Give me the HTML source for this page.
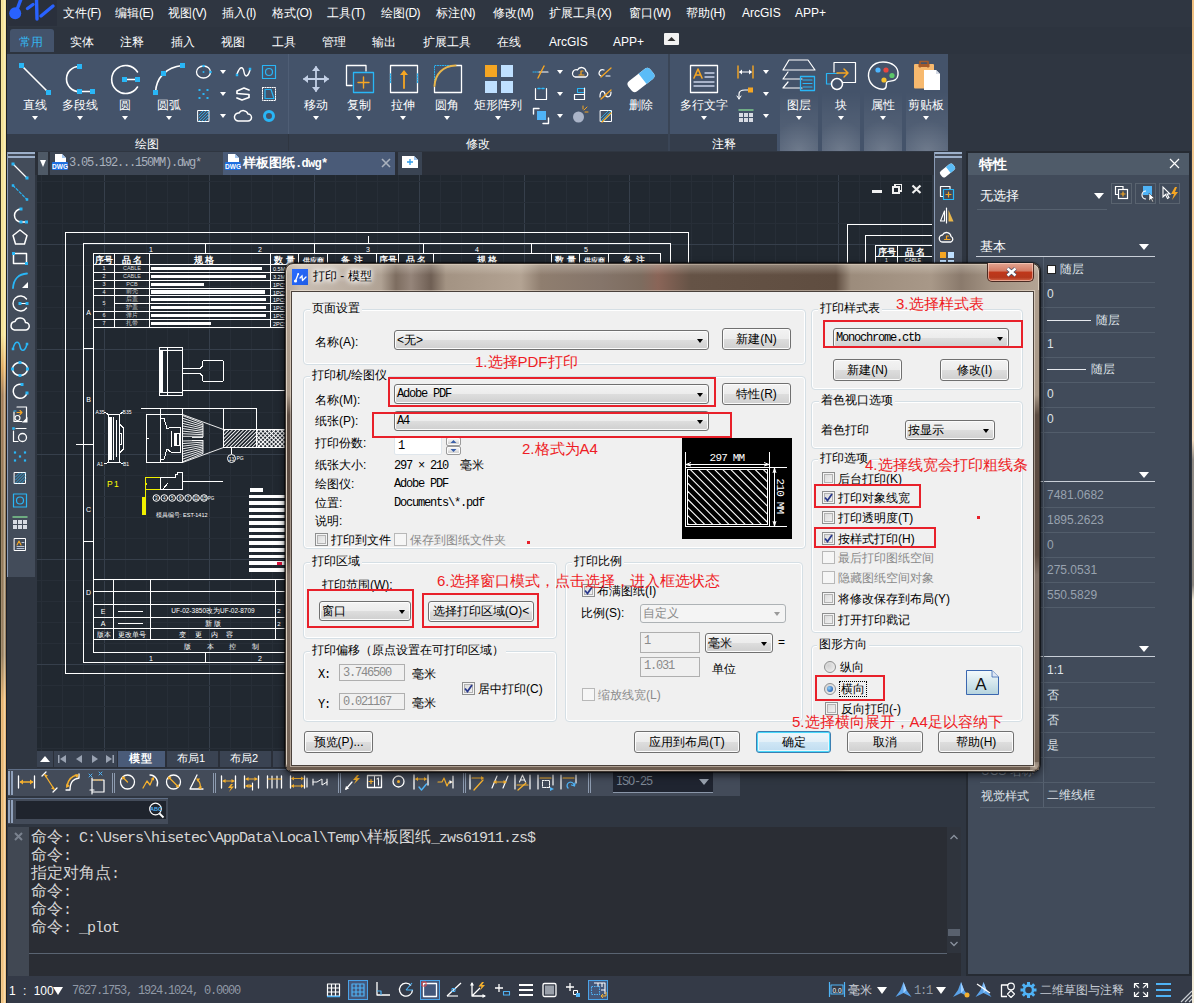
<!DOCTYPE html>
<html><head><meta charset="utf-8"><title>ZWCAD</title>
<style>
html,body{margin:0;padding:0}
body{width:1194px;height:1003px;position:relative;overflow:hidden;background:#2f3641;font-family:"Liberation Sans",sans-serif;}
div{position:absolute;box-sizing:border-box}
svg{position:absolute;overflow:visible}
.t{white-space:nowrap;line-height:1}
.mono{font-family:"Liberation Mono",monospace}
.serif{font-family:"Liberation Serif",serif}

.mi{color:#fff;font-size:12px;top:7px}
.rt{color:#fff;font-size:12px;top:36px}
.rl{color:#fff;font-size:12px;top:99px;transform:translateX(-50%)}
.pl{color:#fff;font-size:12px;top:138px;transform:translateX(-50%)}
.da{width:0;height:0;border-left:3px solid transparent;border-right:3px solid transparent;border-top:4px solid #fff}

.cad{font-family:"Liberation Sans",sans-serif;stroke:none}

.pv{font-size:12px;color:#dde1e7}
.pg{font-size:12px;color:#98a2af}

.cmd{font-family:"Liberation Mono",monospace;font-size:15px;letter-spacing:-1px;color:#d6d6d6;left:31px}
.cmd b{font-weight:normal;font-size:16px;letter-spacing:0}

.dl{font-size:12px;color:#000;white-space:nowrap;line-height:12px}
.dg{font-size:12px;color:#8a8a8a;white-space:nowrap;line-height:12px}
.dm{font-family:"Liberation Mono",monospace;font-size:12px;letter-spacing:-1.2px;color:#000;white-space:nowrap;line-height:12px}
.btn{border:1px solid #707070;border-radius:3px;background:linear-gradient(180deg,#f3f3f3 0%,#ececec 48%,#dddddd 52%,#cfcfcf 100%);box-shadow:inset 0 0 0 1px #fcfcfc;font-size:12px;color:#000;text-align:center;white-space:nowrap}
.cmb{border:1px solid #707070;border-radius:3px;background:linear-gradient(180deg,#f3f3f3 0%,#ececec 48%,#dddddd 52%,#cfcfcf 100%);box-shadow:inset 0 0 0 1px #fcfcfc}
.cmbd{border:1px solid #adb2b5;border-radius:3px;background:#f4f4f4}
.ed{border:1px solid #dfe6ec;border-radius:2px;background:#fff}
.edd{border:1px solid #afafaf;background:#f0f0f0}
.grp{border:1px solid #d5dfe5;border-radius:4px;box-shadow:inset 0 0 0 1px #fff}
.gl{background:#f0f0f0;padding:0 2px;font-size:12px;color:#000;white-space:nowrap;line-height:12px}
.cb{width:13px;height:13px;border:1px solid #8e8f8f;background:linear-gradient(135deg,#d6d6d6,#f6f6f6);box-shadow:inset 0 0 0 1px #f4f4f4, inset 0 0 0 2px #b3b3b3}
.cbd{width:13px;height:13px;border:1px solid #b8b8b8;background:#f6f6f6}
.red{border:2px solid #e8202a}
.an{font-size:15px;color:#ee1c25;white-space:nowrap;line-height:15px}
.arr{width:0;height:0;border-left:3.5px solid transparent;border-right:3.5px solid transparent;border-top:4px solid #000}
.k{display:inline-block;white-space:nowrap;text-align:justify;text-align-last:justify;text-justify:inter-character}
</style></head>
<body>
<div style="left:0px;top:0px;width:7px;height:1003px;background:#3a3420;"></div>
<div style="left:1px;top:0px;width:5px;height:1003px;background:linear-gradient(180deg,#f3dc80 0px,#f3dc80 335px,#d9943c 368px,#8a5a32 395px,#70502f 520px,#7c5c3a 655px,#e2a050 700px,#eeb466 1003px);"></div>
<div style="left:1px;top:0px;width:5px;height:1003px;background:linear-gradient(90deg,rgba(255,255,240,0.35) 0%,rgba(255,250,220,0.2) 35%,rgba(255,255,235,0.55) 70%,rgba(255,240,200,0.1) 100%);"></div>
<div style="left:6px;top:0px;width:1px;height:1003px;background:#1c1f26;"></div>
<div style="left:7px;top:0px;width:1187px;height:27px;background:#2f3641;"></div>
<svg style="left:8px;top:0" width="50" height="26" viewBox="0 0 50 26"><rect x="0" y="0" width="49" height="26" fill="#2a303c"/><g stroke="#2962ff" stroke-width="3.4" stroke-linecap="round" fill="none"><path d="M8.500 11 L13 -1"/><path d="M19.500 8.500 L25 4.500"/><path d="M28.500 -1 L29 19"/><path d="M33 16 L45 6"/></g><circle cx="7.200" cy="13.200" r="6" fill="#2962ff"/></svg>
<div class="t mi" style="left:63px"><span class="k" style="width:2em">文件</span><span style="font-size:12px;letter-spacing:-0.6px">(F)</span></div>
<div class="t mi" style="left:115px"><span class="k" style="width:2em">编辑</span><span style="font-size:12px;letter-spacing:-0.6px">(E)</span></div>
<div class="t mi" style="left:168px"><span class="k" style="width:2em">视图</span><span style="font-size:12px;letter-spacing:-0.6px">(V)</span></div>
<div class="t mi" style="left:222px"><span class="k" style="width:2em">插入</span><span style="font-size:12px;letter-spacing:-0.6px">(I)</span></div>
<div class="t mi" style="left:272px"><span class="k" style="width:2em">格式</span><span style="font-size:12px;letter-spacing:-0.6px">(O)</span></div>
<div class="t mi" style="left:327px"><span class="k" style="width:2em">工具</span><span style="font-size:12px;letter-spacing:-0.6px">(T)</span></div>
<div class="t mi" style="left:381px"><span class="k" style="width:2em">绘图</span><span style="font-size:12px;letter-spacing:-0.6px">(D)</span></div>
<div class="t mi" style="left:436px"><span class="k" style="width:2em">标注</span><span style="font-size:12px;letter-spacing:-0.6px">(N)</span></div>
<div class="t mi" style="left:493px"><span class="k" style="width:2em">修改</span><span style="font-size:12px;letter-spacing:-0.6px">(M)</span></div>
<div class="t mi" style="left:549px"><span class="k" style="width:4em">扩展工具</span><span style="font-size:12px;letter-spacing:-0.6px">(X)</span></div>
<div class="t mi" style="left:629px"><span class="k" style="width:2em">窗口</span><span style="font-size:12px;letter-spacing:-0.6px">(W)</span></div>
<div class="t mi" style="left:686px"><span class="k" style="width:2em">帮助</span><span style="font-size:12px;letter-spacing:-0.6px">(H)</span></div>
<div class="t mi" style="left:742px">ArcGIS</div>
<div class="t mi" style="left:795px">APP+</div>
<div style="left:7px;top:27px;width:1187px;height:27px;background:#2d343f;"></div>
<div style="left:10px;top:29px;width:44px;height:23px;background:#44536b;border-radius:3px 3px 0 0"></div>
<div class="t rt" style="left:19px;color:#35b5f0"><span class="k" style="width:2em">常用</span></div>
<div class="t rt" style="left:70px;color:#ffffff"><span class="k" style="width:2em">实体</span></div>
<div class="t rt" style="left:120px;color:#ffffff"><span class="k" style="width:2em">注释</span></div>
<div class="t rt" style="left:171px;color:#ffffff"><span class="k" style="width:2em">插入</span></div>
<div class="t rt" style="left:221px;color:#ffffff"><span class="k" style="width:2em">视图</span></div>
<div class="t rt" style="left:272px;color:#ffffff"><span class="k" style="width:2em">工具</span></div>
<div class="t rt" style="left:322px;color:#ffffff"><span class="k" style="width:2em">管理</span></div>
<div class="t rt" style="left:372px;color:#ffffff"><span class="k" style="width:2em">输出</span></div>
<div class="t rt" style="left:423px;color:#ffffff"><span class="k" style="width:4em">扩展工具</span></div>
<div class="t rt" style="left:497px;color:#ffffff"><span class="k" style="width:2em">在线</span></div>
<div class="t rt" style="left:549px;color:#ffffff">ArcGIS</div>
<div class="t rt" style="left:613px;color:#ffffff">APP+</div>
<svg style="left:664px;top:33px" width="15" height="12"><rect width="15" height="12" rx="1" fill="#f2f2f2"/><path d="M3.5 8 L7.5 4 L11.5 8 Z" fill="#333"/></svg>
<div style="left:7px;top:54px;width:281px;height:80px;background:#44536a;"></div>
<div style="left:7px;top:134px;width:281px;height:17px;background:#343d4b;"></div>
<div style="left:289px;top:54px;width:379px;height:80px;background:#44536a;"></div>
<div style="left:289px;top:134px;width:379px;height:17px;background:#343d4b;"></div>
<div style="left:670px;top:54px;width:107px;height:80px;background:#44536a;"></div>
<div style="left:670px;top:134px;width:107px;height:17px;background:#343d4b;"></div>
<div style="left:288px;top:54px;width:1px;height:80px;background:#4f5e75;"></div>
<div style="left:668px;top:54px;width:2px;height:97px;background:#3a4556;"></div>
<div style="left:777px;top:54px;width:171px;height:97px;background:#44536a;"></div>
<div style="left:780px;top:92px;width:38px;height:59px;background:linear-gradient(180deg,rgba(255,255,255,0) 0%,rgba(255,255,255,0.05) 40%,rgba(255,255,255,0.10) 100%);"></div>
<div style="left:780px;top:110px;width:38px;height:41px;background:radial-gradient(ellipse 70% 75% at 50% 100%,rgba(255,255,255,0.14),rgba(255,255,255,0) 100%);"></div>
<div style="left:822px;top:92px;width:38px;height:59px;background:linear-gradient(180deg,rgba(255,255,255,0) 0%,rgba(255,255,255,0.05) 40%,rgba(255,255,255,0.10) 100%);"></div>
<div style="left:822px;top:110px;width:38px;height:41px;background:radial-gradient(ellipse 70% 75% at 50% 100%,rgba(255,255,255,0.14),rgba(255,255,255,0) 100%);"></div>
<div style="left:864px;top:92px;width:38px;height:59px;background:linear-gradient(180deg,rgba(255,255,255,0) 0%,rgba(255,255,255,0.05) 40%,rgba(255,255,255,0.10) 100%);"></div>
<div style="left:864px;top:110px;width:38px;height:41px;background:radial-gradient(ellipse 70% 75% at 50% 100%,rgba(255,255,255,0.14),rgba(255,255,255,0) 100%);"></div>
<div style="left:906px;top:92px;width:42px;height:59px;background:linear-gradient(180deg,rgba(255,255,255,0) 0%,rgba(255,255,255,0.05) 40%,rgba(255,255,255,0.10) 100%);"></div>
<div style="left:906px;top:110px;width:42px;height:41px;background:radial-gradient(ellipse 70% 75% at 50% 100%,rgba(255,255,255,0.14),rgba(255,255,255,0) 100%);"></div>
<div class="t pl" style="left:147px"><span class="k" style="width:2em">绘图</span></div>
<div class="t pl" style="left:478px"><span class="k" style="width:2em">修改</span></div>
<div class="t pl" style="left:724px"><span class="k" style="width:2em">注释</span></div>
<div class="t rl" style="left:35px"><span class="k" style="width:2em">直线</span></div>
<div class="da" style="left:32px;top:116px"></div>
<div class="t rl" style="left:80px"><span class="k" style="width:3em">多段线</span></div>
<div class="da" style="left:77px;top:116px"></div>
<div class="t rl" style="left:125px"><span class="k" style="width:1em">圆</span></div>
<div class="da" style="left:122px;top:116px"></div>
<div class="t rl" style="left:169px"><span class="k" style="width:2em">圆弧</span></div>
<div class="da" style="left:166px;top:116px"></div>
<div class="t rl" style="left:316px"><span class="k" style="width:2em">移动</span></div>
<div class="da" style="left:313px;top:116px"></div>
<div class="t rl" style="left:359px"><span class="k" style="width:2em">复制</span></div>
<div class="da" style="left:356px;top:116px"></div>
<div class="t rl" style="left:403px"><span class="k" style="width:2em">拉伸</span></div>
<div class="da" style="left:400px;top:116px"></div>
<div class="t rl" style="left:447px"><span class="k" style="width:2em">圆角</span></div>
<div class="da" style="left:444px;top:116px"></div>
<div class="t rl" style="left:498px"><span class="k" style="width:4em">矩形阵列</span></div>
<div class="da" style="left:495px;top:116px"></div>
<div class="t rl" style="left:641px"><span class="k" style="width:2em">删除</span></div>
<div class="t rl" style="left:704px"><span class="k" style="width:4em">多行文字</span></div>
<div class="da" style="left:701px;top:116px"></div>
<div class="t rl" style="left:799px"><span class="k" style="width:2em">图层</span></div>
<div class="da" style="left:796px;top:116px"></div>
<div class="t rl" style="left:841px"><span class="k" style="width:1em">块</span></div>
<div class="da" style="left:838px;top:116px"></div>
<div class="t rl" style="left:883px"><span class="k" style="width:2em">属性</span></div>
<div class="da" style="left:880px;top:116px"></div>
<div class="t rl" style="left:926px"><span class="k" style="width:3em">剪贴板</span></div>
<div class="da" style="left:923px;top:116px"></div>
<div class="da" style="left:220px;top:70px"></div>
<div class="da" style="left:220px;top:92px"></div>
<div class="da" style="left:220px;top:114px"></div>
<div class="da" style="left:557px;top:70px"></div>
<div class="da" style="left:557px;top:92px"></div>
<div class="da" style="left:557px;top:114px"></div>
<div class="da" style="left:763px;top:70px"></div>
<div class="da" style="left:763px;top:92px"></div>
<div class="da" style="left:763px;top:114px"></div>
<svg style="left:0;top:0" width="1194" height="160" viewBox="0 0 1194 160" fill="none" stroke-linecap="round" stroke-linejoin="round"><path d="M21.5 65.5 L48.5 92.5" stroke="#ffffff" stroke-width="1.6"/><rect x="19.0" y="63.0" width="5" height="5" fill="#29b6f6"/><rect x="46.0" y="90.0" width="5" height="5" fill="#29b6f6"/><path d="M79 66.5 A12.5 12.5 0 0 0 79 91.5 L92 91.5" stroke="#ffffff" stroke-width="1.6"/><rect x="77.0" y="64.0" width="5" height="5" fill="#29b6f6"/><rect x="77.0" y="89.0" width="5" height="5" fill="#29b6f6"/><rect x="90.0" y="89.0" width="5" height="5" fill="#29b6f6"/><path d="M137.5 72 A14 14 0 1 0 137.5 87" stroke="#ffffff" stroke-width="1.6"/><path d="M125 79.5 L137 79.5" stroke="#ffffff" stroke-width="1.4"/><rect x="122.0" y="77.0" width="5" height="5" fill="#29b6f6"/><rect x="135.0" y="77.0" width="5" height="5" fill="#29b6f6"/><path d="M155.5 92.5 C156 78 166 67 182.5 65.5" stroke="#ffffff" stroke-width="1.6"/><rect x="153.0" y="90.0" width="5" height="5" fill="#29b6f6"/><rect x="161.0" y="71.0" width="5" height="5" fill="#29b6f6"/><rect x="180.0" y="63.0" width="5" height="5" fill="#29b6f6"/><ellipse cx="203.5" cy="72" rx="7" ry="6" stroke="#ffffff" stroke-width="1.3"/><circle cx="203.5" cy="72" r="1" fill="#29b6f6"/><circle cx="203.5" cy="66" r="1.3" fill="#29b6f6"/><circle cx="210.5" cy="72" r="1.3" fill="#29b6f6"/><rect x="198.5" y="89" width="2" height="2" fill="#29b6f6"/><rect x="206.5" y="89" width="2" height="2" fill="#29b6f6"/><rect x="202.5" y="93" width="2" height="2" fill="#29b6f6"/><rect x="198.5" y="97" width="2" height="2" fill="#29b6f6"/><rect x="206.5" y="97" width="2" height="2" fill="#29b6f6"/><rect x="198" y="110.5" width="11" height="11" stroke="#ffffff" stroke-width="1"/><path d="M199 118 l7-7 M199 121 l10-10 M202 121 l7-7 M205 121 l4-4 M199 115 l4-4" stroke="#29b6f6" stroke-width="0.8"/><path d="M237 74 C240 66 243 66 244 72 C245 78 248 77 250 70" stroke="#ffffff" stroke-width="1.4"/><rect x="235.75" y="73.75" width="2.5" height="2.5" fill="#29b6f6"/><rect x="248.75" y="67.75" width="2.5" height="2.5" fill="#29b6f6"/><path d="M249 90 L244 88 L237 91 L237 93.5 L249 94.5 L249 97.5 L242 100 L237 98" stroke="#ffffff" stroke-width="1.7"/><path d="M238 121 L248 121 A3.5 3.5 0 0 0 248 114 A5 5 0 0 0 239 113 A4 4 0 0 0 238 121 Z" stroke="#ffffff" stroke-width="1.5"/><rect x="262.5" y="65.5" width="13" height="13" stroke="#29b6f6" stroke-width="1.2"/><circle cx="269" cy="72" r="3.5" stroke="#29b6f6" stroke-width="1.2"/><rect x="262.5" y="87.5" width="13" height="13" stroke="#ffffff" stroke-width="1" stroke-dasharray="1.2 1.2"/><path d="M265 89.5 L271 89.5 L274 98.5 L265 98.5 Z" stroke="#29b6f6" stroke-width="1.2"/><circle cx="269" cy="116" r="4.5" stroke="#29b6f6" stroke-width="3"/><path d="M316 67 L316 91 M304 79 L328 79" stroke="#c3d0e6" stroke-width="1.8"/><path d="M316 66 l-4 5 h8z M316 92 l-4-5 h8z M303 79 l5-4 v8z M329 79 l-5-4 v8z" fill="#c3d0e6" stroke="none"/><path d="M366 71 V65.5 H346.5 V85.5 H352" stroke="#ffffff" stroke-width="1.3"/><rect x="353.5" y="72.5" width="20" height="20" stroke="#29b6f6" stroke-width="1.3"/><path d="M363.5 77 V88 M358 82.5 H369" stroke="#f5a623" stroke-width="1.4"/><rect x="390.5" y="65.5" width="27" height="27" stroke="#ffffff" stroke-width="1.3"/><path d="M404 88 V72" stroke="#f5a623" stroke-width="1.8"/><path d="M404 70 l-4 5 h8z" fill="#f5a623"/><path d="M390.5 74 V84 M417.5 74 V84" stroke="#29b6f6" stroke-width="1.3" stroke-dasharray="1 1.5"/><path d="M456 65.5 H461.5 V92.5 H434.5 V87" stroke="#ffffff" stroke-width="1.3"/><path d="M434.5 85 V65.5 H455" stroke="#29b6f6" stroke-width="1" stroke-dasharray="1 1.5"/><path d="M434.5 86 C435 74 443 66 455.5 65.5" stroke="#e8b64c" stroke-width="2"/><rect x="485" y="65" width="12" height="12" fill="#f5a623"/><rect x="501" y="65" width="12" height="12" fill="#bfe0ff"/><rect x="485" y="81" width="12" height="12" fill="#bfe0ff"/><rect x="501" y="81" width="12" height="12" fill="#bfe0ff"/><path d="M533 72 H539" stroke="#29b6f6" stroke-width="1" stroke-dasharray="1 1"/><path d="M539 72 H548" stroke="#ffffff" stroke-width="1.2"/><path d="M544 66 L538 78" stroke="#f5a623" stroke-width="1.4"/><path d="M535.5 88.5 V99.5 H546.5 V88.5" stroke="#ffffff" stroke-width="1.2"/><path d="M538 88.5 H544" stroke="#29b6f6" stroke-width="1.6" stroke-dasharray="2 2"/><rect x="537" y="111" width="9" height="9" fill="#4fb3f6"/><path d="M533.5 114 V108.5 H539 M543 123.5 H548.5 V118" stroke="#ffffff" stroke-width="1.4"/><path d="M575 77 H586 A3 3 0 0 0 586 71.5 A4.5 4.5 0 0 0 577.5 70 A3.5 3.5 0 0 0 575 77 Z" stroke="#ffffff" stroke-width="1.3"/><path d="M579 75 H584 M581 75 V71 H583" stroke="#f5a623" stroke-width="1.2"/><rect x="577.5" y="88.5" width="7" height="4" stroke="#29b6f6" stroke-width="1.1"/><path d="M574.5 94.5 H584.5 V99.5 H574.5 Z M584.5 88 V94" stroke="#ffffff" stroke-width="1.2"/><circle cx="578.5" cy="117" r="5.5" fill="#aab4c8"/><path d="M584 110 l3 -3 M585 112 h3 M583 109 v-3" stroke="#f5a623" stroke-width="1"/><path d="M601 76 A3 3 0 0 1 604 70 M606 76 H610" stroke="#ffffff" stroke-width="1.2"/><path d="M601 77 L611 68" stroke="#f5a623" stroke-width="1.3"/><path d="M600 97 C600 90 604 90 605 94 C606 98 611 98 611 92" stroke="#ffffff" stroke-width="1.2"/><path d="M601 99 L611 90" stroke="#f5a623" stroke-width="1.3"/><rect x="600.5" y="110.5" width="11" height="11" stroke="#ffffff" stroke-width="1"/><path d="M601 118 l7-7 M601 121 l10-10 M604 121 l7-7" stroke="#29b6f6" stroke-width="0.8"/><path d="M602 122 L611 113" stroke="#f5a623" stroke-width="1.3"/><g transform="translate(641 80) rotate(-38)"><rect x="-14" y="-6.5" width="28" height="13" rx="4" fill="#ffffff"/><path d="M2 -6.5 H10 A4 4 0 0 1 14 -2.5 V2.5 A4 4 0 0 1 10 6.5 H2 Z" fill="#5bbcf7"/></g><rect x="690.5" y="65.5" width="27" height="27" stroke="#ffffff" stroke-width="1.3"/><path d="M694 78 L698 69 L702 78 M695.5 75 H700.5" stroke="#f5a623" stroke-width="1.6"/><path d="M705 73 H714 M705 77 H714 M694 82 H714 M694 86 H714" stroke="#c7d2e8" stroke-width="1.3"/><path d="M738 66 V78 M753 66 V78" stroke="#f5a623" stroke-width="1.4"/><path d="M740 72 H751" stroke="#ffffff" stroke-width="1.2"/><path d="M739 72 l3-2.5 v5z M752 72 l-3-2.5 v5z" fill="#ffffff"/><path d="M739 99 V94 Q739 90 745 90 H748" stroke="#ffffff" stroke-width="1.2"/><path d="M737 96 l2 3 l2 -3" stroke="#ffffff" stroke-width="1"/><rect x="748" y="87.5" width="5" height="5" fill="#f5a623"/><path d="M739 110 H753" stroke="#7ecb8f" stroke-width="1.5"/><rect x="739" y="113" width="4" height="4" fill="#d7dbe3"/><rect x="744" y="113" width="4" height="4" fill="#d7dbe3"/><rect x="749" y="113" width="4" height="4" fill="#d7dbe3"/><rect x="739" y="118" width="4" height="4" fill="#d7dbe3"/><rect x="744" y="118" width="4" height="4" fill="#d7dbe3"/><rect x="749" y="118" width="4" height="4" fill="#d7dbe3"/><path d="M789 60 H808 L815 70 H783 Z M788 72 L783 79 H802 M788 82 L783 88 H802" stroke="#ffffff" stroke-width="1.2"/><rect x="800.5" y="76.5" width="14" height="14" stroke="#29b6f6" stroke-width="1.3"/><path d="M803 80 H812 M803 83.5 H812 M803 87 H812" stroke="#29b6f6" stroke-width="1.2"/><path d="M834 72 V62.5 H855.5 V82.5 H843" stroke="#ffffff" stroke-width="1.2"/><path d="M831 84 H826.5 V73.5 H838" stroke="#29b6f6" stroke-width="1.2"/><circle cx="837" cy="84" r="5.5" stroke="#ffffff" stroke-width="1.5"/><path d="M837 73 H848 M844 69 l4 4 l-4 4" stroke="#f5a623" stroke-width="1.5"/><path d="M883 62 C871 62 867 72 869 79 C871 87 880 90 884 89 C888 88 885 84 887 82 C889 80 897 83 898 75 C899 67 892 62 883 62 Z" stroke="#ffffff" stroke-width="1.4"/><circle cx="878" cy="70" r="2.600" fill="#4db5ff"/><circle cx="886" cy="70" r="2.600" fill="#e8473f"/><circle cx="892" cy="75.500" r="2.600" fill="#5cc86a"/><circle cx="884" cy="80" r="2.600" fill="#f6c12d"/><rect x="914" y="64" width="20" height="24.500" rx="1" fill="#f7b96e"/><path d="M920 67 V61.500 H928 V67" stroke="#a55a2a" stroke-width="1.600"/><rect x="918.500" y="64" width="11" height="3" fill="#a55a2a"/><path d="M924 70 H936 L940 74 V90 H924 Z" fill="#fff"/><path d="M936 70 V74 H940 Z" fill="#d5dbe6"/></svg>
<div style="left:35px;top:152px;width:900px;height:23px;background:#2a2f38;"></div>
<div style="left:38px;top:152px;width:10px;height:23px;background:#4e5966;"></div>
<div style="left:40px;top:160px;width:0;height:0;border-left:3.5px solid transparent;border-right:3.5px solid transparent;border-top:7px solid #fff"></div>
<div style="left:50px;top:152px;width:173px;height:23px;background:#3d4654;"></div>
<div style="left:223px;top:152px;width:172px;height:23px;background:#4a5b78;"></div>
<div style="left:398px;top:152px;width:24px;height:23px;background:#3a4453;"></div>
<svg style="left:52px;top:154px" width="16" height="18" viewBox="0 0 16 18"><path d="M3 0 H10 L14 4 V9 H3 Z" fill="#fff"/><path d="M10 0 V4 H14 Z" fill="#9fc4ee"/><rect x="0" y="8" width="16" height="8" rx="1" fill="#1e6fe0"/><text x="8" y="14.6" font-size="6.5" font-weight="bold" text-anchor="middle" fill="#fff" font-family="Liberation Sans,sans-serif">DWG</text></svg>
<svg style="left:225px;top:154px" width="16" height="18" viewBox="0 0 16 18"><path d="M3 0 H10 L14 4 V9 H3 Z" fill="#fff"/><path d="M10 0 V4 H14 Z" fill="#9fc4ee"/><rect x="0" y="8" width="16" height="8" rx="1" fill="#1e6fe0"/><text x="8" y="14.6" font-size="6.5" font-weight="bold" text-anchor="middle" fill="#fff" font-family="Liberation Sans,sans-serif">DWG</text></svg>
<div class="t mono" style="left:69px;top:157px;font-size:12px;letter-spacing:-1.2px;color:#a9b1bd">3.05.192...150MM).dwg*</div>
<div class="t" style="left:243px;top:156px;font-size:13px;font-weight:bold;color:#fff"><span class="k" style="width:4em">样板图纸</span><span class="mono" style="font-size:12px;letter-spacing:-0.7px">.dwg*</span></div>
<svg style="left:381px;top:158px" width="10" height="10"><path d="M1 1 L9 9 M9 1 L1 9" stroke="#aab2be" stroke-width="1.6"/></svg>
<svg style="left:402px;top:156px" width="17" height="13"><path d="M0 0 H12 L16 4 V12 H0 Z" fill="#fff"/><path d="M12 0 V4 H16 Z" fill="#9fc4ee"/><path d="M8 3 V9 M5 6 H11" stroke="#2c9be8" stroke-width="1.3"/></svg>
<div style="left:37px;top:175px;width:895px;height:576px;background:#212830;"></div>
<svg style="left:0;top:0" width="1194" height="760" viewBox="0 0 1194 760" fill="none" shape-rendering="crispEdges"><defs><clipPath id="cv"><rect x="37" y="175" width="895" height="576"/></clipPath><pattern id="h1" width="2.6" height="2.6" patternUnits="userSpaceOnUse" patternTransform="rotate(-45)"><rect width="2.6" height="1.2" fill="#fff"/></pattern><pattern id="h2" width="3" height="3" patternUnits="userSpaceOnUse" patternTransform="rotate(45)"><rect width="3" height="1" fill="#fff"/><rect width="1" height="3" fill="#fff"/></pattern></defs><g clip-path="url(#cv)"><rect x="41" y="175" width="1" height="576" fill="#272e37"/><rect x="62" y="175" width="1" height="576" fill="#272e37"/><rect x="83" y="175" width="1" height="576" fill="#272e37"/><rect x="104" y="175" width="1" height="576" fill="#363f4b"/><rect x="125" y="175" width="1" height="576" fill="#272e37"/><rect x="146" y="175" width="1" height="576" fill="#272e37"/><rect x="167" y="175" width="1" height="576" fill="#272e37"/><rect x="188" y="175" width="1" height="576" fill="#272e37"/><rect x="209" y="175" width="1" height="576" fill="#363f4b"/><rect x="230" y="175" width="1" height="576" fill="#272e37"/><rect x="251" y="175" width="1" height="576" fill="#272e37"/><rect x="272" y="175" width="1" height="576" fill="#272e37"/><rect x="293" y="175" width="1" height="576" fill="#272e37"/><rect x="314" y="175" width="1" height="576" fill="#363f4b"/><rect x="335" y="175" width="1" height="576" fill="#272e37"/><rect x="356" y="175" width="1" height="576" fill="#272e37"/><rect x="377" y="175" width="1" height="576" fill="#272e37"/><rect x="398" y="175" width="1" height="576" fill="#272e37"/><rect x="419" y="175" width="1" height="576" fill="#363f4b"/><rect x="440" y="175" width="1" height="576" fill="#272e37"/><rect x="461" y="175" width="1" height="576" fill="#272e37"/><rect x="482" y="175" width="1" height="576" fill="#272e37"/><rect x="503" y="175" width="1" height="576" fill="#272e37"/><rect x="524" y="175" width="1" height="576" fill="#363f4b"/><rect x="545" y="175" width="1" height="576" fill="#272e37"/><rect x="566" y="175" width="1" height="576" fill="#272e37"/><rect x="587" y="175" width="1" height="576" fill="#272e37"/><rect x="608" y="175" width="1" height="576" fill="#272e37"/><rect x="629" y="175" width="1" height="576" fill="#363f4b"/><rect x="649" y="175" width="1" height="576" fill="#272e37"/><rect x="670" y="175" width="1" height="576" fill="#272e37"/><rect x="691" y="175" width="1" height="576" fill="#272e37"/><rect x="712" y="175" width="1" height="576" fill="#272e37"/><rect x="733" y="175" width="1" height="576" fill="#363f4b"/><rect x="754" y="175" width="1" height="576" fill="#272e37"/><rect x="775" y="175" width="1" height="576" fill="#272e37"/><rect x="796" y="175" width="1" height="576" fill="#272e37"/><rect x="817" y="175" width="1" height="576" fill="#272e37"/><rect x="838" y="175" width="1" height="576" fill="#363f4b"/><rect x="859" y="175" width="1" height="576" fill="#272e37"/><rect x="880" y="175" width="1" height="576" fill="#272e37"/><rect x="901" y="175" width="1" height="576" fill="#272e37"/><rect x="922" y="175" width="1" height="576" fill="#272e37"/><rect x="37" y="181" width="895" height="1" fill="#272e37"/><rect x="37" y="202" width="895" height="1" fill="#272e37"/><rect x="37" y="223" width="895" height="1" fill="#272e37"/><rect x="37" y="244" width="895" height="1" fill="#363f4b"/><rect x="37" y="265" width="895" height="1" fill="#272e37"/><rect x="37" y="286" width="895" height="1" fill="#272e37"/><rect x="37" y="307" width="895" height="1" fill="#272e37"/><rect x="37" y="328" width="895" height="1" fill="#272e37"/><rect x="37" y="349" width="895" height="1" fill="#363f4b"/><rect x="37" y="370" width="895" height="1" fill="#272e37"/><rect x="37" y="391" width="895" height="1" fill="#272e37"/><rect x="37" y="412" width="895" height="1" fill="#272e37"/><rect x="37" y="433" width="895" height="1" fill="#272e37"/><rect x="37" y="454" width="895" height="1" fill="#363f4b"/><rect x="37" y="475" width="895" height="1" fill="#272e37"/><rect x="37" y="496" width="895" height="1" fill="#272e37"/><rect x="37" y="517" width="895" height="1" fill="#272e37"/><rect x="37" y="538" width="895" height="1" fill="#272e37"/><rect x="37" y="559" width="895" height="1" fill="#363f4b"/><rect x="37" y="580" width="895" height="1" fill="#272e37"/><rect x="37" y="601" width="895" height="1" fill="#272e37"/><rect x="37" y="622" width="895" height="1" fill="#272e37"/><rect x="37" y="643" width="895" height="1" fill="#272e37"/><rect x="37" y="664" width="895" height="1" fill="#363f4b"/><rect x="37" y="685" width="895" height="1" fill="#272e37"/><rect x="37" y="706" width="895" height="1" fill="#272e37"/><rect x="37" y="727" width="895" height="1" fill="#272e37"/><rect x="37" y="748" width="895" height="1" fill="#272e37"/><path d="M65.5 232.5 H688.5 V673.5 H65.5 Z" stroke="#fff" stroke-width="1"/><path d="M83.5 243.5 H670.5 V662.5 H83.5 Z" stroke="#fff" stroke-width="1"/><path d="M93.5 253.5 H660.5 V652.5 H93.5 Z" stroke="#fff" stroke-width="1"/><path d="M205.5 243.5 L205.5 253.5" stroke="#ffffff" stroke-width="1"/><path d="M205.5 652.5 L205.5 662.5" stroke="#ffffff" stroke-width="1"/><path d="M314.5 243.5 L314.5 253.5" stroke="#ffffff" stroke-width="1"/><path d="M314.5 652.5 L314.5 662.5" stroke="#ffffff" stroke-width="1"/><path d="M423.5 243.5 L423.5 253.5" stroke="#ffffff" stroke-width="1"/><path d="M423.5 652.5 L423.5 662.5" stroke="#ffffff" stroke-width="1"/><path d="M531.5 243.5 L531.5 253.5" stroke="#ffffff" stroke-width="1"/><path d="M531.5 652.5 L531.5 662.5" stroke="#ffffff" stroke-width="1"/><path d="M368.5 236 L368.5 243.5" stroke="#ffffff" stroke-width="1"/><text x="151" y="251.5" font-size="7" text-anchor="middle" fill="#fff" class="cad" xml:space="preserve" >1</text><text x="151" y="660.5" font-size="7" text-anchor="middle" fill="#fff" class="cad" xml:space="preserve" >1</text><text x="260" y="251.5" font-size="7" text-anchor="middle" fill="#fff" class="cad" xml:space="preserve" >2</text><text x="260" y="660.5" font-size="7" text-anchor="middle" fill="#fff" class="cad" xml:space="preserve" >2</text><text x="368" y="251.5" font-size="7" text-anchor="middle" fill="#fff" class="cad" xml:space="preserve" >3</text><text x="368" y="660.5" font-size="7" text-anchor="middle" fill="#fff" class="cad" xml:space="preserve" >3</text><text x="477" y="251.5" font-size="7" text-anchor="middle" fill="#fff" class="cad" xml:space="preserve" >4</text><text x="477" y="660.5" font-size="7" text-anchor="middle" fill="#fff" class="cad" xml:space="preserve" >4</text><text x="586" y="251.5" font-size="7" text-anchor="middle" fill="#fff" class="cad" xml:space="preserve" >5</text><text x="586" y="660.5" font-size="7" text-anchor="middle" fill="#fff" class="cad" xml:space="preserve" >5</text><path d="M83.5 348.5 L93.5 348.5" stroke="#ffffff" stroke-width="1"/><path d="M83.5 541.5 L93.5 541.5" stroke="#ffffff" stroke-width="1"/><path d="M76 444.5 L93.5 444.5" stroke="#ffffff" stroke-width="1"/><text x="88.5" y="315" font-size="7" text-anchor="middle" fill="#fff" class="cad" xml:space="preserve" >A</text><text x="88.5" y="402" font-size="7" text-anchor="middle" fill="#fff" class="cad" xml:space="preserve" >B</text><text x="88.5" y="512" font-size="7" text-anchor="middle" fill="#fff" class="cad" xml:space="preserve" >C</text><text x="88.5" y="595" font-size="7" text-anchor="middle" fill="#fff" class="cad" xml:space="preserve" >D</text><path d="M93.5 264.5 L376.5 264.5" stroke="#ffffff" stroke-width="1"/><path d="M93.5 272.5 L376.5 272.5" stroke="#ffffff" stroke-width="1"/><path d="M93.5 280.5 L376.5 280.5" stroke="#ffffff" stroke-width="1"/><path d="M93.5 288.5 L376.5 288.5" stroke="#ffffff" stroke-width="1"/><path d="M93.5 295.5 L376.5 295.5" stroke="#ffffff" stroke-width="1"/><path d="M114.5 303.5 L376.5 303.5" stroke="#ffffff" stroke-width="1"/><path d="M93.5 311.5 L376.5 311.5" stroke="#ffffff" stroke-width="1"/><path d="M93.5 319.5 L376.5 319.5" stroke="#ffffff" stroke-width="1"/><path d="M93.5 327.5 L376.5 327.5" stroke="#ffffff" stroke-width="1"/><path d="M114.5 253.5 L114.5 327.5" stroke="#ffffff" stroke-width="1"/><path d="M149.5 253.5 L149.5 327.5" stroke="#ffffff" stroke-width="1"/><path d="M270.5 253.5 L270.5 327.5" stroke="#ffffff" stroke-width="1"/><path d="M298.5 253.5 L298.5 327.5" stroke="#ffffff" stroke-width="1"/><path d="M327.5 253.5 L327.5 327.5" stroke="#ffffff" stroke-width="1"/><path d="M376.5 253.5 L376.5 327.5" stroke="#ffffff" stroke-width="1"/><text x="104" y="262.5" font-size="8.5" text-anchor="middle" fill="#fff" class="cad" xml:space="preserve" font-weight="bold">序号</text><text x="132" y="262.5" font-size="8.5" text-anchor="middle" fill="#fff" class="cad" xml:space="preserve" font-weight="bold">品 名</text><text x="204" y="262.5" font-size="8.5" text-anchor="middle" fill="#fff" class="cad" xml:space="preserve" font-weight="bold">规 格</text><text x="284.5" y="262.5" font-size="8.5" text-anchor="middle" fill="#fff" class="cad" xml:space="preserve" font-weight="bold">数 量</text><text x="313" y="262.5" font-size="7" text-anchor="middle" fill="#fff" class="cad" xml:space="preserve" font-weight="bold">供应商</text><text x="352" y="262.5" font-size="8.5" text-anchor="middle" fill="#fff" class="cad" xml:space="preserve" font-weight="bold">备  注</text><text x="104" y="270.0" font-size="5.5" text-anchor="middle" fill="#e0e0e0" class="cad" xml:space="preserve" >1</text><text x="132" y="269.8" font-size="5.5" text-anchor="middle" fill="#d8d8d8" class="cad" xml:space="preserve" >CABLE</text><rect x="151" y="266.7" width="110.5" height="3.6" fill="#fff"/><text x="273" y="271.0" font-size="5.5" text-anchor="start" fill="#fff" class="cad" xml:space="preserve" >0.5M</text><text x="104" y="278.0" font-size="5.5" text-anchor="middle" fill="#e0e0e0" class="cad" xml:space="preserve" >2</text><text x="132" y="277.8" font-size="5.5" text-anchor="middle" fill="#d8d8d8" class="cad" xml:space="preserve" >CABLE</text><rect x="151" y="274.7" width="115" height="3.6" fill="#fff"/><text x="273" y="279.0" font-size="5.5" text-anchor="start" fill="#fff" class="cad" xml:space="preserve" >3.2M</text><text x="104" y="286.0" font-size="5.5" text-anchor="middle" fill="#e0e0e0" class="cad" xml:space="preserve" >3</text><text x="132" y="285.8" font-size="5.5" text-anchor="middle" fill="#d8d8d8" class="cad" xml:space="preserve" >PCB</text><rect x="151" y="282.7" width="52.5" height="3.6" fill="#fff"/><text x="273" y="287.0" font-size="5.5" text-anchor="start" fill="#fff" class="cad" xml:space="preserve" >1PCS</text><text x="104" y="293.5" font-size="5.5" text-anchor="middle" fill="#e0e0e0" class="cad" xml:space="preserve" >4</text><text x="132" y="293.3" font-size="5.5" text-anchor="middle" fill="#d8d8d8" class="cad" xml:space="preserve" >前壳</text><rect x="151" y="290.2" width="114" height="3.6" fill="#fff"/><text x="273" y="294.5" font-size="5.5" text-anchor="start" fill="#fff" class="cad" xml:space="preserve" >1PCS</text><text x="104" y="305.0" font-size="5.5" text-anchor="middle" fill="#e0e0e0" class="cad" xml:space="preserve" >5</text><text x="132" y="300.8" font-size="5.5" text-anchor="middle" fill="#d8d8d8" class="cad" xml:space="preserve" >后盖</text><rect x="151" y="297.7" width="115" height="3.6" fill="#fff"/><text x="273" y="302.0" font-size="5.5" text-anchor="start" fill="#fff" class="cad" xml:space="preserve" >1PCS</text><text x="132" y="308.8" font-size="5.5" text-anchor="middle" fill="#d8d8d8" class="cad" xml:space="preserve" >护盖</text><rect x="151" y="305.7" width="115" height="3.6" fill="#fff"/><text x="273" y="310.0" font-size="5.5" text-anchor="start" fill="#fff" class="cad" xml:space="preserve" >1PCS</text><text x="104" y="317.0" font-size="5.5" text-anchor="middle" fill="#e0e0e0" class="cad" xml:space="preserve" >6</text><text x="132" y="316.8" font-size="5.5" text-anchor="middle" fill="#d8d8d8" class="cad" xml:space="preserve" >弹片</text><rect x="151" y="313.7" width="115" height="3.6" fill="#fff"/><text x="273" y="318.0" font-size="5.5" text-anchor="start" fill="#fff" class="cad" xml:space="preserve" >1PCS</text><text x="104" y="325.0" font-size="5.5" text-anchor="middle" fill="#e0e0e0" class="cad" xml:space="preserve" >7</text><text x="132" y="324.8" font-size="5.5" text-anchor="middle" fill="#d8d8d8" class="cad" xml:space="preserve" >扎带</text><rect x="151" y="321.7" width="60" height="3.6" fill="#fff"/><text x="273" y="326.0" font-size="5.5" text-anchor="start" fill="#fff" class="cad" xml:space="preserve" >2PCS</text><path d="M159.5 347.5 H182.5 V395.5 H159.5 Z" stroke="#fff" stroke-width="1"/><rect x="160" y="350" width="3" height="43" fill="#fff"/><path d="M167.5 347.5 L167.5 395.5" stroke="#ffffff" stroke-width="1"/><path d="M160 392.5 L182 392.5" stroke="#ffffff" stroke-width="1"/><path d="M160 350.5 L182 350.5" stroke="#ffffff" stroke-width="1"/><path d="M182.5 368.5 H200 L202.5 366 V362.5 Q202.5 360.5 204.5 360.5 H221.5 Q223.5 360.5 223.5 362.5 V379.5 Q223.5 381.5 221.5 381.5 H204.5 Q202.5 381.5 202.5 379.5 V376 L200 373.5 H182.5" stroke="#fff"/><path d="M182.5 390.5 L285 390.5" stroke="#ffffff" stroke-width="1"/><path d="M108.5 414.5 H119.5 V462.5 H108.5 Z" stroke="#fff" stroke-width="1"/><rect x="109" y="417" width="2.5" height="43" fill="#fff"/><path d="M113.5 417 L113.5 460" stroke="#ffffff" stroke-width="1"/><path d="M116.5 420 L116.5 457" stroke="#ffffff" stroke-width="1"/><path d="M119.5 424 L123.5 428 V449 L119.5 453 M119.5 433 H121.5 V444 H119.5" stroke="#fff"/><path d="M108.5 414.5 L104 412" stroke="#ffffff" stroke-width="1"/><path d="M119.5 414.5 L123 412" stroke="#ffffff" stroke-width="1"/><path d="M108.5 462.5 L104 464" stroke="#ffffff" stroke-width="1"/><path d="M119.5 462.5 L123 464" stroke="#ffffff" stroke-width="1"/><text x="100" y="414" font-size="5" text-anchor="middle" fill="#fff" class="cad" xml:space="preserve" >A35</text><text x="127" y="414" font-size="5" text-anchor="middle" fill="#fff" class="cad" xml:space="preserve" >B35</text><text x="100" y="466" font-size="5" text-anchor="middle" fill="#fff" class="cad" xml:space="preserve" >A1</text><text x="126" y="466" font-size="5" text-anchor="middle" fill="#fff" class="cad" xml:space="preserve" >B1</text><path d="M146.5 414.5 H182.5 V462.5 H146.5 Z" stroke="#fff" stroke-width="1"/><path d="M160.5 408 L160.5 462.5" stroke="#ffffff" stroke-width="1"/><path d="M140.5 408.5 L256.5 408.5" stroke="#ffffff" stroke-width="1"/><path d="M182.5 408 L182.5 414" stroke="#ffffff" stroke-width="1"/><path d="M223.5 408 L223.5 429" stroke="#ffffff" stroke-width="1"/><path d="M256.5 408 L256.5 429" stroke="#ffffff" stroke-width="1"/><path d="M160.5 418 H164 L167 429 L171 427 H180 V452 H171 L167 449 L164 459 H160.5 M171 431 V447 M174 433 H179 V445 H174 Z M146.5 438.5 H149" stroke="#fff"/><rect x="174" y="433" width="3" height="12" fill="#fff"/><path d="M182.5 415.5 L203 423.5 M182.5 441.0 L203 440.5 M182.5 418.1 L203 425.1 M182.5 443.6 L203 442.1 M182.5 420.7 L203 426.7 M182.5 446.2 L203 443.7 M182.5 423.3 L203 428.3 M182.5 448.8 L203 445.3 M182.5 425.9 L203 429.9 M182.5 451.4 L203 446.9 M182.5 428.5 L203 431.5 M182.5 454.0 L203 448.5 M182.5 431.1 L203 433.1 M182.5 456.6 L203 450.1 M182.5 433.7 L203 434.7 M182.5 459.2 L203 451.7 M182.5 436.3 L203 436.3 M182.5 461.8 L203 453.3 M182.5 414.5 L223.5 429.5 M182.5 462.5 L223.5 447.5 M203 423.5 V437 M203 440 V453.5 M192 437.5 H203 M192 440.5 H203" stroke="#fff" stroke-width="0.9" shape-rendering="auto"/><rect x="223.5" y="429.5" width="33" height="18" fill="url(#h1)" shape-rendering="auto"/><rect x="256.5" y="429.5" width="30" height="18" fill="url(#h2)" shape-rendering="auto"/><path d="M223.5 429 L223.5 448" stroke="#ffffff" stroke-width="1"/><path d="M256.5 429 L256.5 448" stroke="#ffffff" stroke-width="1"/><path d="M223.5 429.5 L286 429.5" stroke="#ffffff" stroke-width="1"/><path d="M223.5 447.5 L286 447.5" stroke="#ffffff" stroke-width="1"/><path d="M231.5 447 L231.5 454" stroke="#ffffff" stroke-width="1"/><circle cx="231.5" cy="458.5" r="4" stroke="#fff" shape-rendering="auto"/><text x="231.5" y="460.5" font-size="5" text-anchor="middle" fill="#fff" class="cad" xml:space="preserve" >13</text><text x="240" y="460" font-size="5" text-anchor="middle" fill="#fff" class="cad" xml:space="preserve" >PG</text><text x="113.5" y="487" font-size="8.5" text-anchor="middle" fill="#ffff00" class="cad" xml:space="preserve" letter-spacing="1.2">P1</text><path d="M164 477.5 H145.5 V483 L146.5 484 L145.5 485 V489.5 H171 M145.5 489.5 V515" stroke="#f0f000" stroke-width="1.2"/><rect x="142" y="497" width="2.6" height="18" fill="#f0f000"/><path d="M160.5 489.5 V477.5 H175 V474 H177.5 V472.5 H182.5 V489.5 Z" stroke="#fff"/><path d="M182.5 481.5 L223 481.5" stroke="#ffffff" stroke-width="1"/><path d="M163 489 L168 483" stroke="#ffffff" stroke-width="1"/><circle cx="156.3" cy="498" r="3.3" stroke="#fff" shape-rendering="auto"/><text x="156.3" y="500" font-size="4.5" text-anchor="middle" fill="#fff" class="cad" xml:space="preserve" >3</text><circle cx="164.25" cy="498" r="3.3" stroke="#fff" shape-rendering="auto"/><text x="164.25" y="500" font-size="4.5" text-anchor="middle" fill="#fff" class="cad" xml:space="preserve" >4</text><circle cx="172.20000000000002" cy="498" r="3.3" stroke="#fff" shape-rendering="auto"/><text x="172.20000000000002" y="500" font-size="4.5" text-anchor="middle" fill="#fff" class="cad" xml:space="preserve" >5</text><circle cx="180.15" cy="498" r="3.3" stroke="#fff" shape-rendering="auto"/><text x="180.15" y="500" font-size="4.5" text-anchor="middle" fill="#fff" class="cad" xml:space="preserve" >6</text><circle cx="188.10000000000002" cy="498" r="3.3" stroke="#fff" shape-rendering="auto"/><text x="188.10000000000002" y="500" font-size="4.5" text-anchor="middle" fill="#fff" class="cad" xml:space="preserve" >7</text><circle cx="196.05" cy="498" r="3.3" stroke="#fff" shape-rendering="auto"/><text x="196.05" y="500" font-size="4.5" text-anchor="middle" fill="#fff" class="cad" xml:space="preserve" >11</text><circle cx="204.0" cy="498" r="3.3" stroke="#fff" shape-rendering="auto"/><text x="204.0" y="500" font-size="4.5" text-anchor="middle" fill="#fff" class="cad" xml:space="preserve" >15</text><text x="211" y="500" font-size="4.5" text-anchor="middle" fill="#fff" class="cad" xml:space="preserve" >PG</text><text x="156" y="517" font-size="5.5" text-anchor="start" fill="#fff" class="cad" xml:space="preserve" >模具编号: EST-1412</text><rect x="249.5" y="488" width="13.5" height="3.5" fill="#fff"/><rect x="249" y="494.5" width="40" height="3.8" fill="#fff"/><rect x="249" y="501.2" width="40" height="3.8" fill="#fff"/><rect x="249" y="507.9" width="40" height="3.8" fill="#fff"/><rect x="249" y="514.5" width="40" height="3.8" fill="#fff"/><rect x="249" y="521.2" width="40" height="3.8" fill="#fff"/><rect x="249" y="527.9" width="40" height="3.8" fill="#fff"/><rect x="249" y="534.6" width="40" height="3.8" fill="#fff"/><rect x="249" y="541.3" width="40" height="3.8" fill="#fff"/><rect x="249" y="547.9" width="40" height="3.8" fill="#fff"/><rect x="249" y="554.6" width="40" height="3.8" fill="#fff"/><rect x="249" y="561.3" width="40" height="3.8" fill="#fff"/><rect x="249" y="568.0" width="40" height="3.8" fill="#fff"/><rect x="277" y="561.5" width="5" height="3.5" fill="#e0103a"/><path d="M93.5 579.5 L290 579.5" stroke="#ffffff" stroke-width="1"/><path d="M93.5 591.5 L290 591.5" stroke="#ffffff" stroke-width="1"/><path d="M93.5 604.5 L290 604.5" stroke="#ffffff" stroke-width="1"/><path d="M93.5 617.5 L290 617.5" stroke="#ffffff" stroke-width="1"/><path d="M93.5 628.5 L290 628.5" stroke="#ffffff" stroke-width="1"/><path d="M93.5 639.5 L290 639.5" stroke="#ffffff" stroke-width="1"/><path d="M113.5 579.5 L113.5 639.5" stroke="#ffffff" stroke-width="1"/><path d="M150.5 579.5 L150.5 639.5" stroke="#ffffff" stroke-width="1"/><path d="M275.5 579.5 L275.5 639.5" stroke="#ffffff" stroke-width="1"/><text x="103" y="613.5" font-size="7" text-anchor="middle" fill="#fff" class="cad" xml:space="preserve" >E</text><text x="103" y="626" font-size="7" text-anchor="middle" fill="#fff" class="cad" xml:space="preserve" >A</text><path d="M117.5 611.5 L143 611.5" stroke="#ffffff" stroke-width="1"/><path d="M117.5 623.5 L143 623.5" stroke="#ffffff" stroke-width="1"/><text x="213" y="613" font-size="6.5" text-anchor="middle" fill="#fff" class="cad" xml:space="preserve" >UF-02-3850改为UF-02-8709</text><text x="213" y="626" font-size="6.5" text-anchor="middle" fill="#fff" class="cad" xml:space="preserve" >新 版</text><text x="103.5" y="637" font-size="6.5" text-anchor="middle" fill="#fff" class="cad" xml:space="preserve" >版本</text><text x="132" y="637" font-size="6.5" text-anchor="middle" fill="#fff" class="cad" xml:space="preserve" >更改单号</text><text x="208" y="637" font-size="6.5" text-anchor="middle" fill="#fff" class="cad" xml:space="preserve" letter-spacing="3.5">变 更 内 容</text><text x="225" y="649" font-size="6.5" text-anchor="middle" fill="#fff" class="cad" xml:space="preserve" letter-spacing="7">版 本 控 制</text><text x="279" y="613" font-size="6" text-anchor="middle" fill="#fff" class="cad" xml:space="preserve" >2</text><text x="279" y="626" font-size="6" text-anchor="middle" fill="#fff" class="cad" xml:space="preserve" >2</text><path d="M398.5 253.5 L398.5 263" stroke="#ffffff" stroke-width="1"/><path d="M433.5 253.5 L433.5 263" stroke="#ffffff" stroke-width="1"/><path d="M551.5 253.5 L551.5 263" stroke="#ffffff" stroke-width="1"/><path d="M579.5 253.5 L579.5 263" stroke="#ffffff" stroke-width="1"/><path d="M608.5 253.5 L608.5 263" stroke="#ffffff" stroke-width="1"/><path d="M376.5 253.5 L376.5 263" stroke="#ffffff" stroke-width="1"/><text x="387.5" y="262.5" font-size="8.5" text-anchor="middle" fill="#fff" class="cad" xml:space="preserve" font-weight="bold">序号</text><text x="416" y="262.5" font-size="8.5" text-anchor="middle" fill="#fff" class="cad" xml:space="preserve" font-weight="bold">品 名</text><text x="487" y="262.5" font-size="8.5" text-anchor="middle" fill="#fff" class="cad" xml:space="preserve" font-weight="bold">规 格</text><text x="565.5" y="262.5" font-size="8.5" text-anchor="middle" fill="#fff" class="cad" xml:space="preserve" font-weight="bold">数 量</text><text x="594" y="262.5" font-size="7" text-anchor="middle" fill="#fff" class="cad" xml:space="preserve" font-weight="bold">供应商</text><text x="634" y="262.5" font-size="8.5" text-anchor="middle" fill="#fff" class="cad" xml:space="preserve" font-weight="bold">备  注</text><path d="M847.5 224.5 H1000 V680 H847.5 Z" stroke="#fff" stroke-width="1"/><path d="M865.5 235.5 H1000 V670 H865.5 Z" stroke="#fff" stroke-width="1"/><path d="M875.5 245.5 H1000 V660 H875.5 Z" stroke="#fff" stroke-width="1"/><path d="M875.5 256.5 L933 256.5" stroke="#ffffff" stroke-width="1"/><path d="M897.5 245.5 L897.5 263" stroke="#ffffff" stroke-width="1"/><text x="886.5" y="254.5" font-size="8.5" text-anchor="middle" fill="#fff" class="cad" xml:space="preserve" font-weight="bold">序号</text><text x="915" y="254.5" font-size="8.5" text-anchor="middle" fill="#fff" class="cad" xml:space="preserve" font-weight="bold">品 名</text><text x="886.5" y="261.5" font-size="5" text-anchor="middle" fill="#fff" class="cad" xml:space="preserve" >1</text><text x="913" y="261.5" font-size="5" text-anchor="middle" fill="#fff" class="cad" xml:space="preserve" >CABLE</text></g><rect x="872" y="190" width="10" height="3" fill="#f0f0f0"/><path d="M895 186 V184.5 H901.5 V191 H900" stroke="#f0f0f0" stroke-width="1.2"/><rect x="892.8" y="187" width="6.4" height="6.4" stroke="#f0f0f0" stroke-width="1.8"/><path d="M912.5 185.5 L920.5 193 M920.5 185.5 L912.5 193" stroke="#f0f0f0" stroke-width="2.2" shape-rendering="auto"/></svg>
<div style="left:8px;top:152px;width:27px;height:425px;background:#434c5a;"></div>
<div style="left:7px;top:152px;width:1px;height:425px;background:#8a9bb5;"></div>
<div style="left:8px;top:152px;width:27px;height:2px;background:#9db0ca;"></div>
<div style="left:8px;top:156px;width:27px;height:2px;background:#9db0ca;"></div>
<svg style="left:0;top:150px" width="40" height="430" viewBox="0 150 40 430" fill="none" stroke-linecap="round" stroke-linejoin="round"><path d="M13 164 L27 178" stroke="#ffffff" stroke-width="1.3"/><rect x="11.5" y="162.5" width="3" height="3" fill="#29b6f6"/><rect x="25.5" y="176.5" width="3" height="3" fill="#29b6f6"/><path d="M13 185.500 L27 199.500" stroke="#29b6f6" stroke-width="1.2" stroke-dasharray="2.500 2"/><rect x="11.75" y="184.25" width="2.5" height="2.5" fill="#29b6f6"/><rect x="25.75" y="198.25" width="2.5" height="2.5" fill="#29b6f6"/><path d="M21 209 A6.500 6.500 0 0 0 21 222 L26 222" stroke="#ffffff" stroke-width="1.500"/><rect x="19.5" y="207.5" width="3" height="3" fill="#29b6f6"/><rect x="19.5" y="220.5" width="3" height="3" fill="#29b6f6"/><rect x="25.0" y="220.5" width="3" height="3" fill="#29b6f6"/><path d="M20 230 L27 235.500 L24.500 244 H15.500 L13 235.500 Z" stroke="#ffffff" stroke-width="1.500"/><rect x="13.500" y="253.500" width="13" height="10" stroke="#ffffff" stroke-width="1.500"/><rect x="12.0" y="252.0" width="3" height="3" fill="#29b6f6"/><rect x="25.0" y="262.0" width="3" height="3" fill="#29b6f6"/><path d="M13 288 C13.500 279 19 274 27 273.500" stroke="#29b6f6" stroke-width="1.800"/><path d="M28 282 V288 H22 Z" fill="#ffffff"/><path d="M26.500 299 A7.500 7.500 0 1 0 26.500 308" stroke="#ffffff" stroke-width="1.400"/><path d="M20 303.500 H27" stroke="#ffffff" stroke-width="1.200"/><rect x="18.5" y="302.0" width="3" height="3" fill="#29b6f6"/><rect x="25.5" y="302.0" width="3" height="3" fill="#29b6f6"/><path d="M14.500 330 H25.500 A3.500 3.500 0 0 0 25.500 322.500 A5.500 5.500 0 0 0 15 321.500 A4.300 4.300 0 0 0 14.500 330 Z" stroke="#ffffff" stroke-width="1.500"/><path d="M13 349 C15 340 19 341 20 346.500 C21 352 25 352 27 344" stroke="#29b6f6" stroke-width="1.500"/><rect x="11.75" y="347.75" width="2.5" height="2.5" fill="#29b6f6"/><rect x="25.75" y="342.75" width="2.5" height="2.5" fill="#29b6f6"/><ellipse cx="20" cy="369" rx="7.500" ry="6.500" stroke="#ffffff" stroke-width="1.500"/><rect x="18.5" y="361.0" width="3" height="3" fill="#29b6f6"/><rect x="11.0" y="367.5" width="3" height="3" fill="#29b6f6"/><rect x="26.0" y="367.5" width="3" height="3" fill="#29b6f6"/><rect x="18.5" y="374.0" width="3" height="3" fill="#29b6f6"/><path d="M22 384.500 A7 7 0 1 0 27 393" stroke="#ffffff" stroke-width="1.500"/><rect x="20.5" y="383.0" width="3" height="3" fill="#29b6f6"/><rect x="25.5" y="391.5" width="3" height="3" fill="#29b6f6"/><path d="M17 407 H26.500 V419 M14 412 V421.500 H22" stroke="#ffffff" stroke-width="1.200"/><path d="M14 411 H16" stroke="#29b6f6" stroke-width="1.200"/><circle cx="17.500" cy="418" r="2.500" stroke="#ffffff" stroke-width="1.100"/><path d="M17 412.500 H22 M20 410.500 l2 2 l-2 2" stroke="#f5a623" stroke-width="1.100"/><path d="M27.500 417 V422.500 H22 Z" fill="#ffffff"/><path d="M16 428.500 H26 M13.500 431 V441.500 H18" stroke="#ffffff" stroke-width="1.200"/><circle cx="22.500" cy="437.500" r="4" stroke="#ffffff" stroke-width="1.300"/><rect x="12.25" y="427.25" width="2.5" height="2.5" fill="#29b6f6"/><rect x="13.9" y="451.4" width="2.2" height="2.2" fill="#29b6f6"/><rect x="23.9" y="451.4" width="2.2" height="2.2" fill="#29b6f6"/><rect x="18.9" y="455.4" width="2.2" height="2.2" fill="#29b6f6"/><rect x="13.9" y="459.4" width="2.2" height="2.2" fill="#29b6f6"/><rect x="23.9" y="459.4" width="2.2" height="2.2" fill="#29b6f6"/><rect x="14.500" y="472.500" width="11" height="11" stroke="#ffffff" stroke-width="1"/><path d="M15.500 480 l7 -7 M15.500 483 l10 -10 M18.500 483 l7 -7 M21.500 483 l4 -4 M15.500 477 l4 -4" stroke="#29b6f6" stroke-width="0.800"/><rect x="13.500" y="494" width="13" height="13" stroke="#29b6f6" stroke-width="1.200"/><circle cx="20" cy="500.500" r="3.500" stroke="#29b6f6" stroke-width="1.200"/><path d="M13 517 H27" stroke="#7ecb8f" stroke-width="1.500"/><rect x="13" y="520" width="4" height="4" fill="#d7dbe3"/><rect x="18" y="520" width="4" height="4" fill="#d7dbe3"/><rect x="23" y="520" width="4" height="4" fill="#d7dbe3"/><rect x="13" y="525" width="4" height="4" fill="#d7dbe3"/><rect x="18" y="525" width="4" height="4" fill="#d7dbe3"/><rect x="23" y="525" width="4" height="4" fill="#d7dbe3"/><rect x="14.500" y="538.500" width="11" height="12" stroke="#ffffff" stroke-width="1"/><path d="M17 545 L19 541 L21 545" stroke="#f5a623" stroke-width="1.100"/><path d="M22 542.500 H24 M17 546.500 H24 M17 548.500 H24" stroke="#c7d2e8" stroke-width="0.900"/></svg>
<div style="left:37px;top:751px;width:896px;height:17px;background:#2a2f39;"></div>
<div style="left:37px;top:751px;width:16px;height:16px;background:#3a4352;"></div>
<div style="left:54px;top:751px;width:63px;height:16px;background:#3a4352;"></div>
<div style="left:118px;top:751px;width:47px;height:16px;background:#4a5b78;"></div>
<div style="left:167px;top:751px;width:51px;height:16px;background:#3a4352;"></div>
<div style="left:220px;top:751px;width:51px;height:16px;background:#3a4352;"></div>
<div style="left:273px;top:751px;width:12px;height:16px;background:#3a4352;"></div>
<svg style="left:37px;top:751px" width="90" height="16" viewBox="0 0 90 16"><path d="M3 11 L8 5 L13 11 Z" fill="#fff"/><g fill="#9aa3b2"><path d="M21 4 h1.5 v8 h-1.5z M29 4 v8 l-6 -4z"/><path d="M45 4 v8 l-6 -4z"/><path d="M55 4 v8 l6 -4z"/><path d="M69 4 v8 l6 -4z M75.5 4 h1.5 v8 h-1.5z"/></g></svg>
<div class="t" style="left:129px;top:753px;font-size:11px;font-weight:bold;color:#fff;letter-spacing:1px"><span class="k" style="width:2em">模型</span></div>
<div class="t" style="left:177px;top:753px;font-size:11px;color:#fff"><span class="k" style="width:2em">布局</span>1</div>
<div class="t" style="left:230px;top:753px;font-size:11px;color:#fff"><span class="k" style="width:2em">布局</span>2</div>
<div style="left:934px;top:152px;width:28px;height:420px;background:#434b59;"></div>
<div style="left:934px;top:152px;width:1px;height:420px;background:#8a9bb5;"></div>
<div style="left:935px;top:152px;width:27px;height:2px;background:#9db0ca;"></div>
<div style="left:935px;top:156px;width:27px;height:2px;background:#9db0ca;"></div>
<svg style="left:0;top:0" width="1194" height="300" viewBox="0 0 1194 300" fill="none" stroke-linecap="round" stroke-linejoin="round"><g transform="translate(947.5 170.5) rotate(-38)"><rect x="-8" y="-3.8" width="16" height="7.6" rx="2.5" fill="#ffffff"/><path d="M1 -3.8 H5.5 A2.5 2.5 0 0 1 8 -1.3 V1.3 A2.5 2.5 0 0 1 5.5 3.8 H1 Z" fill="#5bbcf7"/></g><path d="M950 189 V186.5 H940.5 V196.500 H943" stroke="#ffffff" stroke-width="1.2"/><rect x="943.5" y="189.5" width="10" height="10" stroke="#29b6f6" stroke-width="1.2"/><path d="M948.5 192 V197 M946 194.5 H951" stroke="#f5a623" stroke-width="1.2"/><path d="M946.5 208 V223" stroke="#ffffff" stroke-width="1.2"/><path d="M944.5 211 V221 H940.5 Z" stroke="#ffffff" stroke-width="1.1"/><path d="M948.500 210 V221.5 H953.5 Z" fill="#e8b64c"/><path d="M943 242 H951 A3 3 0 0 0 951 236.5 A4.5 4.5 0 0 0 942.5 235 A3.5 3.5 0 0 0 943 242 Z" stroke="#ffffff" stroke-width="1.3"/><path d="M944.5 239.5 H950 M946.5 239.5 V236 H948.5" stroke="#f5a623" stroke-width="1.2"/><rect x="940" y="252" width="6" height="6" fill="#f5a623"/><rect x="948" y="252" width="6" height="6" fill="#bfe0ff"/><rect x="940" y="260" width="6" height="2" fill="#bfe0ff"/><rect x="948" y="260" width="6" height="2" fill="#bfe0ff"/></svg>
<div style="left:966px;top:151px;width:225px;height:825px;background:#262b33;"></div>
<div style="left:968px;top:153px;width:221px;height:821px;background:#414b5a;"></div>
<div style="left:968px;top:153px;width:221px;height:22px;background:#4f5b69;"></div>
<div class="t" style="left:979px;top:157px;font-size:14px;font-weight:bold;color:#fff"><span class="k" style="width:2em">特性</span></div>
<svg style="left:1169px;top:158px" width="11" height="11"><path d="M1 1 L10 10 M10 1 L1 10" stroke="#fff" stroke-width="1.2"/></svg>
<div class="t" style="left:980px;top:189px;font-size:13px;color:#fff"><span class="k" style="width:3em">无选择</span></div>
<div style="left:1094px;top:193px;width:0;height:0;border-left:5px solid transparent;border-right:5px solid transparent;border-top:6px solid #fff"></div>
<div style="left:977px;top:209px;width:130px;height:1px;background:#56616f;"></div>
<div style="left:1111px;top:183px;width:21px;height:21px;border:1px solid #59636f"></div>
<div style="left:1135px;top:183px;width:21px;height:21px;border:1px solid #59636f"></div>
<div style="left:1159px;top:183px;width:21px;height:21px;border:1px solid #59636f"></div>
<svg style="left:0;top:0" width="1194" height="300" viewBox="0 0 1194 300" fill="none"><path d="M1123 189 V186.5 H1115.5 V194.5 H1118" stroke="#ffffff" stroke-width="1.2"/><rect x="1118.5" y="189.5" width="9" height="9" stroke="#ffffff" stroke-width="1.2"/><path d="M1123 191.500 V196.5 M1120.5 194 H1125.5" stroke="#f5a623" stroke-width="1.2"/><rect x="1143" y="186" width="9" height="9" fill="#4fb3f6"/><path d="M1146 199 A4 4 0 1 1 1146 191" stroke="#ffffff" stroke-width="1.2"/><path d="M1149 193 V201 L1151 199 L1152.5 202 L1153.5 201.500 L1152 198.5 H1154.5 Z" fill="#fff" stroke="#333" stroke-width="0.5"/><path d="M1163 187 V197 L1165.5 194.5 L1167.5 198.5 L1169 197.500 L1167 194 H1170 Z" stroke="#ffffff" stroke-width="1.1"/><path d="M1175 187 L1171 194 H1174 L1172 200 L1178 192 H1175 L1177 187 Z" fill="#f5a623"/></svg>
<div class="t" style="left:980px;top:240px;font-size:13px;color:#fff"><span class="k" style="width:2em">基本</span></div><div style="left:1139px;top:244px;width:0;height:0;border-left:5px solid transparent;border-right:5px solid transparent;border-top:6px solid #fff"></div><div style="left:976px;top:256px;width:179px;height:1px;background:#c9cfd8;"></div>
<div style="left:1139px;top:472px;width:0;height:0;border-left:5px solid transparent;border-right:5px solid transparent;border-top:6px solid #fff"></div><div style="left:976px;top:481px;width:179px;height:1px;background:#c9cfd8;"></div>
<div style="left:1139px;top:646px;width:0;height:0;border-left:5px solid transparent;border-right:5px solid transparent;border-top:6px solid #fff"></div><div style="left:976px;top:656px;width:179px;height:1px;background:#c9cfd8;"></div>
<div style="left:1043px;top:257px;width:1px;height:551px;background:#566170;"></div>
<div style="left:980px;top:282px;width:175px;height:1px;background:#525d6b;"></div>
<div style="left:980px;top:307px;width:175px;height:1px;background:#525d6b;"></div>
<div style="left:980px;top:332px;width:175px;height:1px;background:#525d6b;"></div>
<div style="left:980px;top:357px;width:175px;height:1px;background:#525d6b;"></div>
<div style="left:980px;top:382px;width:175px;height:1px;background:#525d6b;"></div>
<div style="left:980px;top:407px;width:175px;height:1px;background:#525d6b;"></div>
<div style="left:980px;top:432px;width:175px;height:1px;background:#525d6b;"></div>
<div style="left:980px;top:507px;width:175px;height:1px;background:#525d6b;"></div>
<div style="left:980px;top:532px;width:175px;height:1px;background:#525d6b;"></div>
<div style="left:980px;top:557px;width:175px;height:1px;background:#525d6b;"></div>
<div style="left:980px;top:582px;width:175px;height:1px;background:#525d6b;"></div>
<div style="left:980px;top:607px;width:175px;height:1px;background:#525d6b;"></div>
<div style="left:980px;top:682px;width:175px;height:1px;background:#525d6b;"></div>
<div style="left:980px;top:707px;width:175px;height:1px;background:#525d6b;"></div>
<div style="left:980px;top:732px;width:175px;height:1px;background:#525d6b;"></div>
<div style="left:980px;top:757px;width:175px;height:1px;background:#525d6b;"></div>
<div style="left:980px;top:782px;width:175px;height:1px;background:#525d6b;"></div>
<div style="left:980px;top:807px;width:175px;height:1px;background:#525d6b;"></div>
<div style="left:1047px;top:265px;width:9px;height:9px;background:#fff;border:1px solid #222"></div>
<div class="t pv" style="left:1060px;top:263px"><span class="k" style="width:2em">随层</span></div>
<div class="t pv" style="left:1047px;top:288px">0</div>
<div style="left:1047px;top:320px;width:44px;height:1px;background:#e6e9ee;"></div>
<div class="t pv" style="left:1096px;top:314px"><span class="k" style="width:2em">随层</span></div>
<div class="t pv" style="left:1047px;top:338px">1</div>
<div style="left:1047px;top:369px;width:39px;height:1px;background:#e6e9ee;"></div>
<div class="t pv" style="left:1091px;top:363px"><span class="k" style="width:2em">随层</span></div>
<div class="t pv" style="left:1047px;top:388px">0</div>
<div class="t pv" style="left:1047px;top:413px">0</div>
<div class="t pg" style="left:1047px;top:489px">7481.0682</div>
<div class="t pg" style="left:1047px;top:514px">1895.2623</div>
<div class="t pg" style="left:1047px;top:539px">0</div>
<div class="t pg" style="left:1047px;top:564px">275.0531</div>
<div class="t pg" style="left:1047px;top:589px">550.5829</div>
<div class="t pv" style="left:1047px;top:664px">1:1</div>
<div class="t pv" style="left:1047px;top:689px"><span class="k" style="width:1em">否</span></div>
<div class="t pv" style="left:1047px;top:714px"><span class="k" style="width:1em">否</span></div>
<div class="t pv" style="left:1047px;top:739px"><span class="k" style="width:1em">是</span></div>
<div class="t pv" style="left:1047px;top:789px"><span class="k" style="width:4em">二维线框</span></div>
<div class="t pv" style="left:981px;top:765px;color:#8c96a3">UCS <span class="k" style="width:2em">名称</span></div>
<div class="t pv" style="left:981px;top:790px"><span class="k" style="width:4em">视觉样式</span></div>
<div style="left:8px;top:769px;width:732px;height:27px;background:#434b59;"></div>
<div style="left:8px;top:769px;width:733px;height:1px;background:#5f6e86;"></div>
<div style="left:8px;top:771px;width:2px;height:24px;background:#8fa0ba;"></div>
<div style="left:11px;top:771px;width:2px;height:24px;background:#8fa0ba;"></div>
<div style="left:112px;top:773px;width:1px;height:20px;background:#8d9bb0;"></div>
<div style="left:114px;top:773px;width:1px;height:20px;background:#8d9bb0;"></div>
<div style="left:213px;top:773px;width:1px;height:20px;background:#8d9bb0;"></div>
<div style="left:215px;top:773px;width:1px;height:20px;background:#8d9bb0;"></div>
<div style="left:338px;top:773px;width:1px;height:20px;background:#8d9bb0;"></div>
<div style="left:340px;top:773px;width:1px;height:20px;background:#8d9bb0;"></div>
<div style="left:463px;top:773px;width:1px;height:20px;background:#8d9bb0;"></div>
<div style="left:465px;top:773px;width:1px;height:20px;background:#8d9bb0;"></div>
<div style="left:588px;top:773px;width:1px;height:20px;background:#8d9bb0;"></div>
<div style="left:590px;top:773px;width:1px;height:20px;background:#8d9bb0;"></div>
<div style="left:613px;top:772px;width:100px;height:21px;background:#1f2430;border-bottom:1px solid #8a96a8"></div>
<div class="t mono" style="left:616px;top:776px;font-size:12px;letter-spacing:-1.2px;color:#7d8795">ISO-25</div>
<div style="left:699px;top:779px;width:0;height:0;border-left:5px solid transparent;border-right:5px solid transparent;border-top:6px solid #9aa3b0"></div>
<svg style="left:0;top:758.5px" width="760" height="40" viewBox="0 760 760 40" fill="none" stroke-linecap="round" stroke-linejoin="round"><path d="M18.5 777 V789 M34.5 777 V789" stroke="#ffffff" stroke-width="1.3"/><path d="M20.5 783 H32.5" stroke="#f5b02e" stroke-width="1.3"/><path d="M19.5 783 l3.5 -2.500 v5z M33.5 783 l-3.5 -2.500 v5z" fill="#f5b02e"/><path d="M42 777 L46 773 M53 793 L57 789" stroke="#ffffff" stroke-width="1.3"/><path d="M45 776 L54 790" stroke="#f5b02e" stroke-width="1.3"/><path d="M44 775 l4 1.500 l-2.500 2z M55 791 l-4 -1.500 l2.500 -2z" fill="#f5b02e"/><path d="M66 791 H70 C70 782 74 780 79 779 V775" stroke="#ffffff" stroke-width="1.3"/><path d="M67 787 C68 781 72 777 77 776" stroke="#f5b02e" stroke-width="1.6"/><path d="M66 789 l0.500 -4.500 l3.500 2.500z M79 775.500 l-4.500 0 l2.500 3.500z" fill="#f5b02e"/><path d="M92 779 V793 H104 V781 H92 M90 791 H94 M92 789 V795" stroke="#ffffff" stroke-width="1.2"/><path d="M89 775 l3 3 M92 775 l-3 3 M99 773 l3 3 M102 773 l-3 3" stroke="#4fb3f6" stroke-width="1"/><path d="M94 781 H102" stroke="#f5b02e" stroke-width="1" stroke-dasharray="1 1.5"/><circle cx="127.5" cy="783" r="7" stroke="#ffffff" stroke-width="1.3"/><path d="M127.5 783 L123 778.500" stroke="#f5b02e" stroke-width="1.3"/><path d="M122 777.500 l3.500 0.500 l-3 3z" fill="#f5b02e"/><path d="M143 789 L147 782 L150 786 L153 779" stroke="#f5b02e" stroke-width="1.3"/><path d="M150 776 A8 8 0 0 1 157 787" stroke="#ffffff" stroke-width="1.3"/><path d="M154 778 l-3.500 2 l3.500 1.500z" fill="#f5b02e"/><circle cx="173.500" cy="783" r="7" stroke="#ffffff" stroke-width="1.3"/><path d="M169 778.500 L178 787.500" stroke="#f5b02e" stroke-width="1.3"/><path d="M168 777.500 l3.500 0.500 l-3 3z M179 788.500 l-3.500 -0.500 l3 -3z" fill="#f5b02e"/><path d="M197 776 L190 790 H203" stroke="#ffffff" stroke-width="1.3"/><path d="M197.500 781 A8 8 0 0 1 200 789" stroke="#f5b02e" stroke-width="1.3"/><path d="M196 779.500 l4 0 l-2 3.500z M201.500 790.500 l-3.500 -2 l3.500 -1.500z" fill="#f5b02e"/><path d="M221.5 777 V789 M235.5 777 V789" stroke="#ffffff" stroke-width="1.3"/><path d="M244.5 777 V789 M258.5 777 V789" stroke="#ffffff" stroke-width="1.3"/><path d="M267.5 777 V789 M281.5 777 V789" stroke="#ffffff" stroke-width="1.3"/><path d="M290.5 777 V789 M304.5 777 V789" stroke="#ffffff" stroke-width="1.3"/><path d="M223 782 H234" stroke="#f5b02e" stroke-width="1.2"/><path d="M222.500 782 l3 -2 v4z M234.500 782 l-3 -2 v4z" fill="#f5b02e"/><path d="M231 785 l-3 4 h3 l-2 4 l5 -5.500 h-3 l2 -2.500z" fill="#f5b02e"/><path d="M246 780 H257 M246 787 H252" stroke="#f5b02e" stroke-width="1.2"/><path d="M245.500 780 l3 -2 v4z M257.500 780 l-3 -2 v4z M245.500 787 l3 -2 v4z M252.500 787 l-3 -2 v4z" fill="#f5b02e"/><path d="M252.500 784 V791" stroke="#ffffff" stroke-width="1.2"/><path d="M272 777 V789 M277 777 V789" stroke="#ffffff" stroke-width="1.2"/><path d="M268 780 H281" stroke="#f5b02e" stroke-width="1.1"/><path d="M292 779.500 H303 M292 787 H303" stroke="#f5b02e" stroke-width="1.2"/><path d="M291 779.500 l3 -2 v4z M304 779.500 l-3 -2 v4z M291 787 l3 -2 v4z M304 787 l-3 -2 v4z" fill="#f5b02e"/><path d="M307 779 V788" stroke="#ffffff" stroke-width="1.2"/><path d="M313 780 V786 M327 780 V786" stroke="#ffffff" stroke-width="1.1"/><path d="M313 783 H317 L322 780 V786 L327 783" stroke="#ffffff" stroke-width="1"/><path d="M346 790 L352 783" stroke="#ffffff" stroke-width="1.3"/><path d="M345 791 l1 -4 l3 2.500z" fill="#ffffff"/><path d="M357 776 l-4 5 h3 l-2 4 l6 -6 h-3 l2 -3z" fill="#f5b02e"/><rect x="367.500" y="776.500" width="14" height="12" stroke="#ffffff" stroke-width="1.3"/><path d="M374.500 777 V788" stroke="#ffffff" stroke-width="1"/><path d="M369 782.500 H373 M371 780.500 V784.500" stroke="#f5b02e" stroke-width="1.2"/><path d="M377 780 l1.500 -1 V786" stroke="#ffffff" stroke-width="1.1"/><circle cx="398.500" cy="782.500" r="5.500" stroke="#ffffff" stroke-width="1.3"/><circle cx="398.500" cy="782.500" r="1.500" fill="#f5b02e"/><path d="M414 776 V790 M428 776 V786" stroke="#ffffff" stroke-width="1.3"/><path d="M416 780 H426" stroke="#f5b02e" stroke-width="1.2"/><path d="M415 780 l3 -2 v4z M427 780 l-3 -2 v4z" fill="#f5b02e"/><path d="M419 788 l2.500 3 l5 -6" stroke="#4fb3f6" stroke-width="1.4"/><path d="M438 783 H442 L444 779 L447 787 L449 783 H452" stroke="#f5b02e" stroke-width="1.2"/><path d="M453 777 V789" stroke="#ffffff" stroke-width="1.2"/><path d="M452.500 783 l-3 -2 v4z" fill="#ffffff"/><path d="M470 776 V790" stroke="#ffffff" stroke-width="1.3"/><path d="M472 779 H483" stroke="#f5b02e" stroke-width="1.2"/><path d="M484 779 l-3 -2 v4z" fill="#f5b02e"/><path d="M474 791 L483 781" stroke="#f5b02e" stroke-width="1.3"/><path d="M492 789 L497 777 M503 789 L508 777" stroke="#ffffff" stroke-width="1.2"/><path d="M494 783 H506" stroke="#f5b02e" stroke-width="1.2"/><path d="M493.500 783 l3 -2 v4z M506.500 783 l-3 -2 v4z" fill="#f5b02e"/><path d="M515 776 V790 M530 776 V790" stroke="#ffffff" stroke-width="1.2"/><path d="M519.500 783 L522.500 776 L525.500 783 M520.500 781 H524.500" stroke="#ffffff" stroke-width="1.1"/><path d="M517 786 H528" stroke="#f5b02e" stroke-width="1.1"/><path d="M518 791 L526 784" stroke="#f5b02e" stroke-width="1.3"/><path d="M538 776 V790 M553 776 V786" stroke="#ffffff" stroke-width="1.2"/><path d="M540 779 H551" stroke="#f5b02e" stroke-width="1.1"/><rect x="542.500" y="781.500" width="7" height="7" stroke="#ffffff" stroke-width="1" stroke-dasharray="1.500 1"/><path d="M550 788 l4 2 l-4 2z" fill="#4fb3f6"/><path d="M561 776 V790 M576 776 V784" stroke="#ffffff" stroke-width="1.2"/><path d="M563 779 H574" stroke="#f5b02e" stroke-width="1.1"/><path d="M568 789 A3.500 3.500 0 1 1 574 786 M575 784 l-0.500 3 l-3 -1" stroke="#4fb3f6" stroke-width="1.3"/></svg>
<div style="left:8px;top:798px;width:160px;height:26px;background:#434b59;"></div>
<div style="left:8px;top:798px;width:160px;height:1px;background:#5f6e86;"></div>
<div style="left:8px;top:800px;width:2px;height:23px;background:#8fa0ba;"></div>
<div style="left:11px;top:800px;width:2px;height:23px;background:#8fa0ba;"></div>
<div style="left:16px;top:801px;width:150px;height:18px;background:#1f242d;"></div>
<svg style="left:148px;top:802px" width="18" height="17" viewBox="0 0 18 17"><circle cx="7.500" cy="7" r="5.800" fill="none" stroke="#fff" stroke-width="1.200"/><path d="M11.500 11.500 L15.500 15.500" stroke="#fff" stroke-width="1.800"/><text x="8" y="9.300" font-size="5.500" font-weight="bold" text-anchor="middle" fill="#4fb3f6" font-family="Liberation Sans,sans-serif">ABC</text></svg>
<div style="left:8px;top:827px;width:953px;height:149px;background:#2a2d34;"></div>
<div style="left:8px;top:827px;width:21px;height:149px;background:#414853;"></div>
<svg style="left:14px;top:832px" width="9" height="9"><path d="M1 1 L8 8 M8 1 L1 8" stroke="#7a828e" stroke-width="2"/></svg>
<div class="t cmd" style="top:830px"><b><span class="k" style="width:2em">命令</span></b>: C:\Users\hisetec\AppData\Local\Temp\<b><span class="k" style="width:4em">样板图纸</span></b>_zws61911.zs$</div>
<div class="t cmd" style="top:848px"><b><span class="k" style="width:2em">命令</span></b>:</div>
<div class="t cmd" style="top:866px"><b><span class="k" style="width:5em">指定对角点</span></b>:</div>
<div class="t cmd" style="top:884px"><b><span class="k" style="width:2em">命令</span></b>:</div>
<div class="t cmd" style="top:902px"><b><span class="k" style="width:2em">命令</span></b>:</div>
<div class="t cmd" style="top:920px"><b><span class="k" style="width:2em">命令</span></b>: _plot</div>
<div style="left:29px;top:953px;width:918px;height:1px;background:#5a6472;"></div>
<div style="left:947px;top:827px;width:14px;height:126px;background:#2f343d;"></div>
<svg style="left:947px;top:827px" width="14" height="126" viewBox="0 0 14 126"><path d="M3.500 12 L7 8.500 L10.500 12 M3.500 115 L7 118.500 L10.500 115" stroke="#8a929e" stroke-width="1.300" fill="none"/><rect x="1" y="102" width="12" height="7" fill="#59616e"/></svg>
<div style="left:7px;top:976px;width:1187px;height:27px;background:#343a47;"></div>
<div class="t" style="left:9px;top:985px;font-size:12px;color:#fff;word-spacing:4px">1 : 100</div>
<div style="left:53px;top:987px;width:0;height:0;border-left:5px solid transparent;border-right:5px solid transparent;border-top:8px solid #fff"></div>
<div class="t mono" style="left:72px;top:985px;font-size:12px;letter-spacing:-1.200px;color:#9099a6">7627.1753, 1924.1024, 0.0000</div>
<div style="left:348px;top:980px;width:20px;height:20px;background:#44577a;border:1px solid #4aa3e8"></div>
<div style="left:420px;top:980px;width:20px;height:20px;background:#44577a;border:1px solid #4aa3e8"></div>
<div style="left:588px;top:980px;width:20px;height:20px;background:#44577a;border:1px solid #4aa3e8"></div>
<svg style="left:0;top:976px" width="1194" height="27" viewBox="0 976 1194 27" fill="none" stroke-linejoin="round"><path d="M327.5 984 H339.5 V996 H327.5 Z M331.5 984 V996 M335.5 984 V996 M327.5 988 H339.5 M327.5 992 H339.5" stroke="#ffffff" stroke-width="1.200"/><path d="M327 996.500 H340" stroke="#4fb3f6" stroke-width="1.500"/><path d="M352 984 H364 V996 H352 Z M356 984 V996 M360 984 V996 M352 988 H364 M352 992 H364" stroke="#4fb3f6" stroke-width="1.200"/><path d="M377 982 V995 H390" stroke="#ffffff" stroke-width="1.300"/><path d="M377 991 H381 V995" stroke="#4fb3f6" stroke-width="1.200"/><path d="M411 985.500 A6.500 6.500 0 1 0 412.500 990" stroke="#ffffff" stroke-width="1.300"/><path d="M406 990 L412 983 M406 990 H413" stroke="#4fb3f6" stroke-width="1.100"/><rect x="423.500" y="983.500" width="13" height="13" stroke="#ffffff" stroke-width="1.300"/><rect x="422" y="982" width="4" height="4" stroke="#e24a4a" stroke-width="1"/><path d="M447 996 L461 983" stroke="#ffffff" stroke-width="1.300"/><path d="M447 996 H458" stroke="#ffffff" stroke-width="1.100"/><rect x="452" y="988.500" width="3" height="3" stroke="#4fb3f6" stroke-width="1"/><path d="M472 983 V996 H485 M472 996 L480 988" stroke="#ffffff" stroke-width="1.300"/><path d="M472 982 l-2 3.500 h4z M486 996 l-3.500 -2 v4z" fill="#ffffff"/><path d="M482 982 l-3.500 4.500 h3 l-1.500 4 l5 -5.500 h-3 l2 -3z" fill="#f5b02e"/><path d="M499 984 V992 M495 988 H503" stroke="#ffffff" stroke-width="1.300"/><rect x="503.500" y="991.500" width="6" height="3.500" stroke="#4fb3f6" stroke-width="1.100"/><path d="M519 985 H533 M519 990 H533 M519 995 H533" stroke="#ffffff" stroke-width="2"/><rect x="543" y="983.500" width="13" height="13" rx="1.500" stroke="#ffffff" stroke-width="1.300"/><rect x="545" y="985.500" width="9" height="9" fill="#9aa0aa"/><path d="M570 983 V991 M566 987 H574" stroke="#ffffff" stroke-width="1.300"/><rect x="573.500" y="990.500" width="4" height="4" stroke="#ffffff" stroke-width="1"/><rect x="576" y="993" width="4" height="4" fill="#4fb3f6"/><path d="M594 983 H605 V994 M598 983 V987 M602 983 V987 M601 990 H605" stroke="#ffffff" stroke-width="1.100"/><rect x="591.500" y="986.500" width="8" height="8" stroke="#4fb3f6" stroke-width="1.100" stroke-dasharray="1.500 1"/><path d="M606 992 V996 H601 M603 994 l-2 2 l2 2" stroke="#f5b02e" stroke-width="1"/><rect x="831" y="985" width="12" height="9" stroke="#4fb3f6" stroke-width="1.100"/><path d="M829.500 982 V997 M844.500 982 V997" stroke="#4fb3f6" stroke-width="1.200"/><text x="837" y="992.500" font-size="6.500" text-anchor="middle" fill="#ffffff" font-family="Liberation Sans,sans-serif">0.0</text><path d="M877 987 H887 L882 994 Z" fill="#fff"/><path d="M936 987 H946 L941 994 Z" fill="#fff"/><path d="M903.5 982 L906.5 990 L911.5 997 L903.5 993 L895.5 997 L900.5 990 Z" fill="#5aa2e8"/><path d="M903.5 982 L906.5 990 L903.5 993 Z" fill="#9fd0ff"/><path d="M961 982 L964 990 L969 997 L961 993 L953 997 L958 990 Z" fill="#5aa2e8"/><path d="M961 982 L964 990 L961 993 Z" fill="#9fd0ff"/><circle cx="967" cy="995" r="2.500" fill="#f5b02e"/><path d="M983.5 982 L986.5 990 L991.5 997 L983.5 993 L975.5 997 L980.5 990 Z" fill="#5aa2e8"/><path d="M983.5 982 L986.5 990 L983.5 993 Z" fill="#9fd0ff"/><path d="M977 984 L990 993" stroke="#ffffff" stroke-width="1.300"/><path d="M1008 985 H1001.500 V996.500 H1007" stroke="#ffffff" stroke-width="1.300"/><circle cx="1011" cy="986.500" r="3.300" stroke="#ffffff" stroke-width="1.200"/><path d="M1011 990.500 l3.500 3.500 l-3.500 3.500 l-3.500 -3.500z" stroke="#ffffff" stroke-width="1.100"/><path d="M1032.5 990.0 L1036.5 990.0 M1031.3 992.8 L1034.2 995.7 M1028.5 994.0 L1028.5 998.0 M1025.7 992.8 L1022.8 995.7 M1024.5 990.0 L1020.5 990.0 M1025.7 987.2 L1022.8 984.3 M1028.5 986.0 L1028.5 982.0 M1031.3 987.2 L1034.2 984.3" stroke="#4fb3f6" stroke-width="3"/><circle cx="1028.500" cy="990" r="4.500" stroke="#4fb3f6" stroke-width="2.500"/><path d="M1135 984 L1147 996 M1147 984 L1135 996" stroke="#ffffff" stroke-width="1.100"/><path d="M1134.500 988 V983.500 H1139 M1143 983.500 H1147.500 V988 M1147.500 992 V996.500 H1143 M1139 996.500 H1134.500 V992" stroke="#ffffff" stroke-width="1.200"/><rect x="1138.500" y="987.500" width="5" height="5" fill="#343a47"/><path d="M1156 984 H1171 M1156 990 H1171 M1156 996 H1171" stroke="#4fb3f6" stroke-width="2.200"/><path d="M1192 991 L1181 1002 M1192 995 L1185 1002 M1192 999 L1189 1002" stroke="#c8ccd2" stroke-width="1.2"/></svg>
<div class="t" style="left:848px;top:984px;font-size:12px;color:#cfd4dc"><span class="k" style="width:2em">毫米</span></div>
<div class="t mono" style="left:914px;top:985px;font-size:12px;letter-spacing:-1.200px;color:#9099a6">1:1</div>
<div class="t" style="left:1040px;top:984px;font-size:12px;color:#c5cad3"><span class="k" style="width:7em">二维草图与注释</span></div>
<div style="left:285px;top:263px;width:755px;height:509px;border-radius:8px;box-shadow:0 3px 7px 1px rgba(0,0,0,0.55), 0 0 1px 1px rgba(0,0,0,0.6);background:#8a7b6f"></div>
<div style="left:285px;top:263px;width:755px;height:509px;border-radius:8px;border:1px solid #3a332e;background:linear-gradient(90deg,#b5a89b 0px,#c9beb3 15px,#b0a294 95px,#7d6d60 110px,#95857a 125px,#6f5f54 145px,#a39383 160px,#b3a393 235px,#8f7e6f 255px,#85756a 315px,#7d6c5f 355px,#8a6558 372px,#655346 405px,#5f4d40 550px,#9c8c7c 565px,#a89888 645px,#8a7a6c 675px,#a39383 705px,#b5a595 756px);box-shadow:inset 0 0 0 1px rgba(255,245,230,0.5)"></div>
<div style="left:287px;top:290px;width:5px;height:480px;background:linear-gradient(180deg,#b0a090 0px,#a89888 105px,#5c4c42 125px,#5a4a40 265px,#83746a 285px,#7c6c60 400px,#6f5f52 480px)"></div>
<div style="left:1034px;top:290px;width:5px;height:480px;background:linear-gradient(180deg,#b0a090 0px,#a89888 105px,#5c4c42 125px,#5a4a40 265px,#83746a 285px,#7c6c60 400px,#6f5f52 480px)"></div>
<div style="left:287px;top:766px;width:751px;height:4px;border-radius:0 0 6px 6px;background:#6c5c4f"></div>
<div style="left:1030px;top:762px;width:9px;height:8px;border-radius:0 0 6px 0;background:radial-gradient(circle at 60% 60%,#b5a595,#7d6f65)"></div>
<div style="left:287px;top:265px;width:751px;height:10px;border-radius:6px 6px 0 0;background:linear-gradient(180deg,rgba(255,250,240,0.28),rgba(255,250,240,0.0))"></div>
<div style="left:291px;top:291px;width:743px;height:475px;background:#f0f0f0;border:1px solid #4a413b;box-shadow:0 0 0 1px rgba(255,245,230,0.45)"></div>
<svg style="left:292px;top:269px" width="16" height="16" viewBox="0 0 16 16"><defs><linearGradient id="ig" x1="0" y1="0" x2="1" y2="1"><stop offset="0" stop-color="#2a6cff"/><stop offset="1" stop-color="#1f5ce6"/></linearGradient></defs><rect width="16" height="16" fill="url(#ig)"/><path d="M3.500 12 L6 5.500 M8 9 L10 7 L10.500 11.500 M11 11 L14 8" stroke="#fff" stroke-width="1.300" fill="none" stroke-linecap="round"/><circle cx="3.500" cy="12" r="1.600" fill="#fff"/><circle cx="6.200" cy="5" r="1" fill="#fff"/></svg>
<div class="t" style="left:313px;top:270px;font-size:12px;color:#000;text-shadow:0 0 6px #fff,0 0 6px #fff,0 0 4px #fff,0 0 10px #fff"><span class="k" style="width:2em">打印</span> - <span class="k" style="width:2em">模型</span></div>
<div style="left:987px;top:263px;width:47px;height:19px;border:1px solid #4a2a22;border-top:none;border-radius:0 0 5px 5px;background:linear-gradient(180deg,#e3a592 0%,#d27a63 45%,#c0371a 50%,#b5381d 80%,#d0664a 100%);box-shadow:inset 0 0 0 1px rgba(255,220,205,0.55)"></div>
<svg style="left:1005px;top:267px" width="13" height="10" viewBox="0 0 13 10"><path d="M2.500 1.500 L10.500 8.500 M10.500 1.500 L2.500 8.500" stroke="#4a4f66" stroke-width="4"/><path d="M2.500 1.500 L10.500 8.500 M10.500 1.500 L2.500 8.500" stroke="#fff" stroke-width="2.400"/></svg>
<div class="grp" style="left:303px;top:309px;width:503px;height:56px"></div><div class="gl" style="left:310px;top:302px"><span class="k" style="width:4em">页面设置</span></div>
<div class="dl" style="left:315px;top:336px"><span class="k" style="width:2em">名称</span>(A):</div>
<div class="cmb" style="left:394px;top:330px;width:315px;height:20px"></div><div class="dl" style="left:397px;top:334px">&lt;<span class="k" style="width:1em">无</span>&gt;</div><div class="arr" style="left:697px;top:339px;border-top-color:#000"></div>
<div class="btn" style="left:722px;top:328px;width:69px;height:22px;line-height:20px;"><span class="k" style="width:2em">新建</span>(N)</div>
<div class="grp" style="left:303px;top:376px;width:503px;height:173px"></div><div class="gl" style="left:310px;top:369px"><span class="k" style="width:3em">打印机</span>/<span class="k" style="width:3em">绘图仪</span></div>
<div class="dl" style="left:315px;top:394px"><span class="k" style="width:2em">名称</span>(M):</div>
<div class="cmb" style="left:394px;top:384px;width:315px;height:20px"></div><div class="dm" style="left:397px;top:388px">Adobe PDF</div><div class="arr" style="left:697px;top:393px;border-top-color:#000"></div>
<div class="btn" style="left:722px;top:383px;width:69px;height:22px;line-height:20px;"><span class="k" style="width:2em">特性</span>(R)</div>
<div class="dl" style="left:315px;top:415px"><span class="k" style="width:2em">纸张</span>(P):</div>
<div class="cmb" style="left:394px;top:411px;width:315px;height:20px"></div><div class="dm" style="left:397px;top:415px">A4</div><div class="arr" style="left:697px;top:420px;border-top-color:#000"></div>
<div class="dl" style="left:315px;top:437px"><span class="k" style="width:4em">打印份数</span>:</div>
<div class="ed" style="left:394px;top:436px;width:48px;height:19px"></div>
<div class="dm" style="left:398px;top:440px">1</div>
<div class="btn" style="left:446px;top:437px;width:15px;height:9px;border-radius:2px;border-color:#9a9a9a"></div><div class="btn" style="left:446px;top:446px;width:15px;height:9px;border-radius:2px;border-color:#9a9a9a"></div>
<svg style="left:446px;top:437px" width="15" height="18"><path d="M4.500 6 L7.500 3 L10.500 6 Z M4.500 12 L7.500 15 L10.500 12 Z" fill="#3a5fa8"/></svg>
<div class="dl" style="left:315px;top:459px"><span class="k" style="width:4em">纸张大小</span>:</div>
<div class="dm" style="left:394px;top:459px">297 × 210&nbsp;&nbsp;<span style="font-family:'Liberation Sans',sans-serif;letter-spacing:0"><span class="k" style="width:2em">毫米</span></span></div>
<div class="dl" style="left:315px;top:478px"><span class="k" style="width:3em">绘图仪</span>:</div>
<div class="dm" style="left:394px;top:478px">Adobe PDF</div>
<div class="dl" style="left:315px;top:497px"><span class="k" style="width:2em">位置</span>:</div>
<div class="dm" style="left:394px;top:497px">Documents\*.pdf</div>
<div class="dl" style="left:315px;top:515px"><span class="k" style="width:2em">说明</span>:</div>
<div class="cb" style="left:315px;top:533px"></div>
<div class="dl" style="left:331px;top:534px"><span class="k" style="width:5em">打印到文件</span></div>
<div class="cbd" style="left:394px;top:533px"></div>
<div class="dg" style="left:410px;top:534px"><span class="k" style="width:8em">保存到图纸文件夹</span></div>
<div style="left:527px;top:541px;width:3px;height:3px;background:#e8202a;"></div>
<div style="left:682px;top:438px;width:110px;height:101px;background:#000;"></div>
<svg style="left:682px;top:438px" width="111" height="101" viewBox="0 0 111 101" fill="none" shape-rendering="crispEdges"><defs><clipPath id="pp"><rect x="6" y="32" width="79" height="54"/></clipPath></defs><rect x="3.500" y="29.500" width="84" height="59" stroke="#fff"/><rect x="5.500" y="31.500" width="80" height="55" stroke="#fff"/><g clip-path="url(#pp)" shape-rendering="auto"><path d="M-58.0 30 l60 60" stroke="#fff" stroke-width="1.1"/><path d="M-49.9 30 l60 60" stroke="#fff" stroke-width="1.1"/><path d="M-41.8 30 l60 60" stroke="#fff" stroke-width="1.1"/><path d="M-33.7 30 l60 60" stroke="#fff" stroke-width="1.1"/><path d="M-25.6 30 l60 60" stroke="#fff" stroke-width="1.1"/><path d="M-17.5 30 l60 60" stroke="#fff" stroke-width="1.1"/><path d="M-9.4 30 l60 60" stroke="#fff" stroke-width="1.1"/><path d="M-1.3 30 l60 60" stroke="#fff" stroke-width="1.1"/><path d="M6.8 30 l60 60" stroke="#fff" stroke-width="1.1"/><path d="M14.9 30 l60 60" stroke="#fff" stroke-width="1.1"/><path d="M23.0 30 l60 60" stroke="#fff" stroke-width="1.1"/><path d="M31.1 30 l60 60" stroke="#fff" stroke-width="1.1"/><path d="M39.2 30 l60 60" stroke="#fff" stroke-width="1.1"/><path d="M47.3 30 l60 60" stroke="#fff" stroke-width="1.1"/><path d="M55.4 30 l60 60" stroke="#fff" stroke-width="1.1"/><path d="M63.5 30 l60 60" stroke="#fff" stroke-width="1.1"/><path d="M71.6 30 l60 60" stroke="#fff" stroke-width="1.1"/><path d="M79.7 30 l60 60" stroke="#fff" stroke-width="1.1"/><path d="M87.8 30 l60 60" stroke="#fff" stroke-width="1.1"/><path d="M95.9 30 l60 60" stroke="#fff" stroke-width="1.1"/></g><path d="M3.500 14 V29 M87.500 14 V29 M4 26.500 H87 M88 29.500 H105 M88 88.500 H105 M92.500 30 V88" stroke="#fff"/><path d="M4 26.500 L9 24.500 M4 26.500 L9 28 M87 26.500 L82 24.500 M87 26.500 L82 28 M92.500 30 l-1.500 5 M92.500 30 l1.500 5 M92.500 88 l-1.500 -5 M92.500 88 l1.500 -5" stroke="#fff" shape-rendering="auto"/><text x="45" y="23" font-size="11" text-anchor="middle" fill="#fff" font-family="Liberation Mono,monospace" letter-spacing="-0.8">297 MM</text><text transform="translate(94.500 58) rotate(90)" font-size="11" text-anchor="middle" fill="#fff" font-family="Liberation Mono,monospace" letter-spacing="-0.8">210 MM</text></svg>
<div class="grp" style="left:303px;top:562px;width:254px;height:77px"></div><div class="gl" style="left:310px;top:555px"><span class="k" style="width:4em">打印区域</span></div>
<div class="dl" style="left:322px;top:579px"><span class="k" style="width:4em">打印范围</span>(W):</div>
<div class="cmb" style="left:319px;top:601px;width:92px;height:20px"></div><div class="dl" style="left:322px;top:605px"><span class="k" style="width:2em">窗口</span></div><div class="arr" style="left:399px;top:610px;border-top-color:#000"></div>
<div class="btn" style="left:428px;top:601px;width:106px;height:21px;line-height:19px;"><span class="k" style="width:6em">选择打印区域</span>(O)&lt;</div>
<div class="grp" style="left:303px;top:651px;width:254px;height:71px"></div><div class="gl" style="left:310px;top:644px"><span class="k" style="width:16em">打印偏移（原点设置在可打印区域）</span></div>
<div class="dm" style="left:318px;top:669px">X:</div>
<div class="dm" style="left:318px;top:699px">Y:</div>
<div class="edd" style="left:339px;top:664px;width:66px;height:17px"></div><div class="dm" style="left:343px;top:667px;color:#8a8a8a">3.746500</div>
<div class="edd" style="left:339px;top:693px;width:66px;height:17px"></div><div class="dm" style="left:343px;top:696px;color:#8a8a8a">0.021167</div>
<div class="dl" style="left:412px;top:668px"><span class="k" style="width:2em">毫米</span></div>
<div class="dl" style="left:412px;top:697px"><span class="k" style="width:2em">毫米</span></div>
<div class="cb" style="left:462px;top:682px"></div><svg style="left:462px;top:682px" width="13" height="13" viewBox="0 0 13 13"><path d="M3 6.500 L5.500 9.500 L10 3" stroke="#2a3a8c" stroke-width="1.800" fill="none"/></svg>
<div class="dl" style="left:478px;top:683px"><span class="k" style="width:4em">居中打印</span>(C)</div>
<div class="grp" style="left:565px;top:562px;width:238px;height:160px"></div><div class="gl" style="left:572px;top:555px"><span class="k" style="width:4em">打印比例</span></div>
<div class="cb" style="left:582px;top:584px"></div><svg style="left:582px;top:584px" width="13" height="13" viewBox="0 0 13 13"><path d="M3 6.500 L5.500 9.500 L10 3" stroke="#2a3a8c" stroke-width="1.800" fill="none"/></svg>
<div class="dl" style="left:597px;top:585px"><span class="k" style="width:4em">布满图纸</span>(I)</div>
<div class="dl" style="left:581px;top:607px"><span class="k" style="width:2em">比例</span>(S):</div>
<div class="cmbd" style="left:640px;top:604px;width:146px;height:19px"></div><div class="dg" style="left:643px;top:607px"><span class="k" style="width:3em">自定义</span></div><div class="arr" style="left:774px;top:612px;border-top-color:#9a9a9a"></div>
<div class="edd" style="left:640px;top:632px;width:60px;height:21px"></div><div class="dm" style="left:644px;top:635px;color:#8a8a8a">1</div>
<div class="cmb" style="left:705px;top:633px;width:68px;height:20px"></div><div class="dl" style="left:708px;top:637px"><span class="k" style="width:2em">毫米</span></div><div class="arr" style="left:761px;top:642px;border-top-color:#000"></div>
<div class="dl" style="left:778px;top:636px">=</div>
<div class="edd" style="left:640px;top:657px;width:60px;height:20px"></div><div class="dm" style="left:644px;top:660px;color:#8a8a8a">1.031</div>
<div class="dl" style="left:712px;top:663px"><span class="k" style="width:2em">单位</span></div>
<div class="cbd" style="left:582px;top:688px"></div>
<div class="dg" style="left:598px;top:689px"><span class="k" style="width:4em">缩放线宽</span>(L)</div>
<div class="grp" style="left:811px;top:309px;width:212px;height:81px"></div><div class="gl" style="left:818px;top:302px"><span class="k" style="width:5em">打印样式表</span></div>
<div class="cmb" style="left:833px;top:328px;width:176px;height:20px"></div><div class="dm" style="left:836px;top:332px">Monochrome.ctb</div><div class="arr" style="left:997px;top:337px;border-top-color:#000"></div>
<div class="btn" style="left:833px;top:359px;width:69px;height:22px;line-height:20px;"><span class="k" style="width:2em">新建</span>(N)</div>
<div class="btn" style="left:940px;top:359px;width:69px;height:22px;line-height:20px;"><span class="k" style="width:2em">修改</span>(I)</div>
<div class="grp" style="left:811px;top:401px;width:212px;height:48px"></div><div class="gl" style="left:819px;top:394px"><span class="k" style="width:6em">着色视口选项</span></div>
<div class="dl" style="left:821px;top:424px"><span class="k" style="width:4em">着色打印</span></div>
<div class="cmb" style="left:905px;top:420px;width:90px;height:20px"></div><div class="dl" style="left:908px;top:424px"><span class="k" style="width:3em">按显示</span></div><div class="arr" style="left:983px;top:429px;border-top-color:#000"></div>
<div class="grp" style="left:811px;top:459px;width:212px;height:174px"></div><div class="gl" style="left:818px;top:452px"><span class="k" style="width:4em">打印选项</span></div>
<div class="cb" style="left:822px;top:472px"></div>
<div class="dl" style="left:838px;top:473px"><span class="k" style="width:4em">后台打印</span>(K)</div>
<div class="cb" style="left:822px;top:491px"></div><svg style="left:822px;top:491px" width="13" height="13" viewBox="0 0 13 13"><path d="M3 6.500 L5.500 9.500 L10 3" stroke="#2a3a8c" stroke-width="1.800" fill="none"/></svg>
<div class="dl" style="left:838px;top:492px"><span class="k" style="width:6em">打印对象线宽</span></div>
<div class="cb" style="left:822px;top:511px"></div>
<div class="dl" style="left:838px;top:512px"><span class="k" style="width:5em">打印透明度</span>(T)</div>
<div class="cb" style="left:822px;top:532px"></div><svg style="left:822px;top:532px" width="13" height="13" viewBox="0 0 13 13"><path d="M3 6.500 L5.500 9.500 L10 3" stroke="#2a3a8c" stroke-width="1.800" fill="none"/></svg>
<div class="dl" style="left:838px;top:533px"><span class="k" style="width:5em">按样式打印</span>(H)</div>
<div class="cbd" style="left:822px;top:551px"></div>
<div class="dg" style="left:838px;top:552px"><span class="k" style="width:8em">最后打印图纸空间</span></div>
<div class="cbd" style="left:822px;top:571px"></div>
<div class="dg" style="left:838px;top:572px"><span class="k" style="width:8em">隐藏图纸空间对象</span></div>
<div class="cb" style="left:822px;top:592px"></div>
<div class="dl" style="left:838px;top:593px"><span class="k" style="width:8em">将修改保存到布局</span>(Y)</div>
<div class="cb" style="left:822px;top:613px"></div>
<div class="dl" style="left:838px;top:614px"><span class="k" style="width:6em">打开打印戳记</span></div>
<div style="left:977px;top:516px;width:3px;height:3px;background:#e8202a;"></div>
<div class="grp" style="left:811px;top:645px;width:212px;height:77px"></div><div class="gl" style="left:817px;top:638px"><span class="k" style="width:4em">图形方向</span></div>
<div style="left:824px;top:661px;width:12px;height:12px;border-radius:6px;border:1px solid #8e8f8f;background:radial-gradient(circle at 35% 35%,#d0d0d0,#f4f4f4)"></div>
<div class="dl" style="left:840px;top:661px"><span class="k" style="width:2em">纵向</span></div>
<div style="left:824px;top:683px;width:12px;height:12px;border-radius:6px;border:1px solid #8e8f8f;background:radial-gradient(circle at 35% 35%,#d0d0d0,#f4f4f4)"></div><div style="left:827px;top:686px;width:6px;height:6px;border-radius:3px;background:radial-gradient(circle at 35% 35%,#8fd0f8,#0a3f9c)"></div>
<div class="dl" style="left:841px;top:683px"><span class="k" style="width:2em">横向</span></div>
<div style="left:839px;top:681px;width:28px;height:16px;border:1px dotted #000"></div>
<div class="cb" style="left:825px;top:702px"></div>
<div class="dl" style="left:841px;top:703px"><span class="k" style="width:4em">反向打印</span>(-)</div>
<svg style="left:966px;top:670px" width="33" height="25" viewBox="0 0 33 25"><defs><linearGradient id="ag" x1="0" y1="0" x2="0" y2="1"><stop offset="0" stop-color="#f4fafc"/><stop offset="1" stop-color="#b5d3de"/></linearGradient></defs><path d="M0.500 0.500 H26 L32.500 7 V24.500 H0.500 Z" fill="url(#ag)" stroke="#3b67b0"/><path d="M26 0.500 V7 H32.500" fill="#dfe8f5" stroke="#3b67b0" stroke-width="0.800"/><text x="15" y="19.500" font-size="17" text-anchor="middle" fill="#111" font-family="Liberation Sans,sans-serif">A</text></svg>
<div class="btn" style="left:304px;top:731px;width:69px;height:22px;line-height:20px;"><span class="k" style="width:2em">预览</span>(P)...</div>
<div class="btn" style="left:634px;top:731px;width:106px;height:22px;line-height:20px;"><span class="k" style="width:5em">应用到布局</span>(T)</div>
<div class="btn" style="left:756px;top:731px;width:75px;height:22px;line-height:20px;border-color:#3c7fb1;box-shadow:inset 0 0 0 1px #48d8fb,inset 0 0 0 2px #e9f6fb;background:linear-gradient(180deg,#f0f6fa 0%,#e3f0f8 48%,#cfe6f5 52%,#bfdcf0 100%)"><span class="k" style="width:2em">确定</span></div>
<div class="btn" style="left:847px;top:731px;width:76px;height:22px;line-height:20px;"><span class="k" style="width:2em">取消</span></div>
<div class="btn" style="left:938px;top:731px;width:76px;height:22px;line-height:20px;"><span class="k" style="width:2em">帮助</span>(H)</div>
<div class="red" style="left:388px;top:377px;width:328px;height:30px"></div>
<div class="red" style="left:372px;top:412px;width:360px;height:26px"></div>
<div class="red" style="left:823px;top:320px;width:200px;height:28px"></div>
<div class="red" style="left:814px;top:484px;width:107px;height:24px"></div>
<div class="red" style="left:814px;top:527px;width:122px;height:21px"></div>
<div class="red" style="left:815px;top:675px;width:70px;height:26px"></div>
<div class="red" style="left:307px;top:589px;width:107px;height:39px"></div>
<div class="red" style="left:422px;top:593px;width:117px;height:35px"></div>
<div class="an" style="left:475px;top:354px">1.<span class="k" style="width:2em">选择</span>PDF<span class="k" style="width:2em">打印</span></div>
<div class="an" style="left:522px;top:441px">2.<span class="k" style="width:3em">格式为</span>A4</div>
<div class="an" style="left:896px;top:296px">3.<span class="k" style="width:5em">选择样式表</span></div>
<div class="an" style="left:865px;top:457px">4.<span class="k" style="width:10em">选择线宽会打印粗线条</span></div>
<div class="an" style="left:792px;top:714px">5.<span class="k" style="width:7em">选择横向展开，</span>A4<span class="k" style="width:5em">足以容纳下</span></div>
<div class="an" style="left:437px;top:573px">6.<span class="k" style="width:18em">选择窗口模式，点击选择，进入框选状态</span></div>
<div style="left:1192px;top:0px;width:2px;height:1003px;background:linear-gradient(180deg,#f0c080 0px,#f2cc98 250px,#f3dcc0 440px,#8f8a84 460px,#8a857e 585px,#efe6d2 600px,#f0ead8 1003px);"></div>
</body></html>
